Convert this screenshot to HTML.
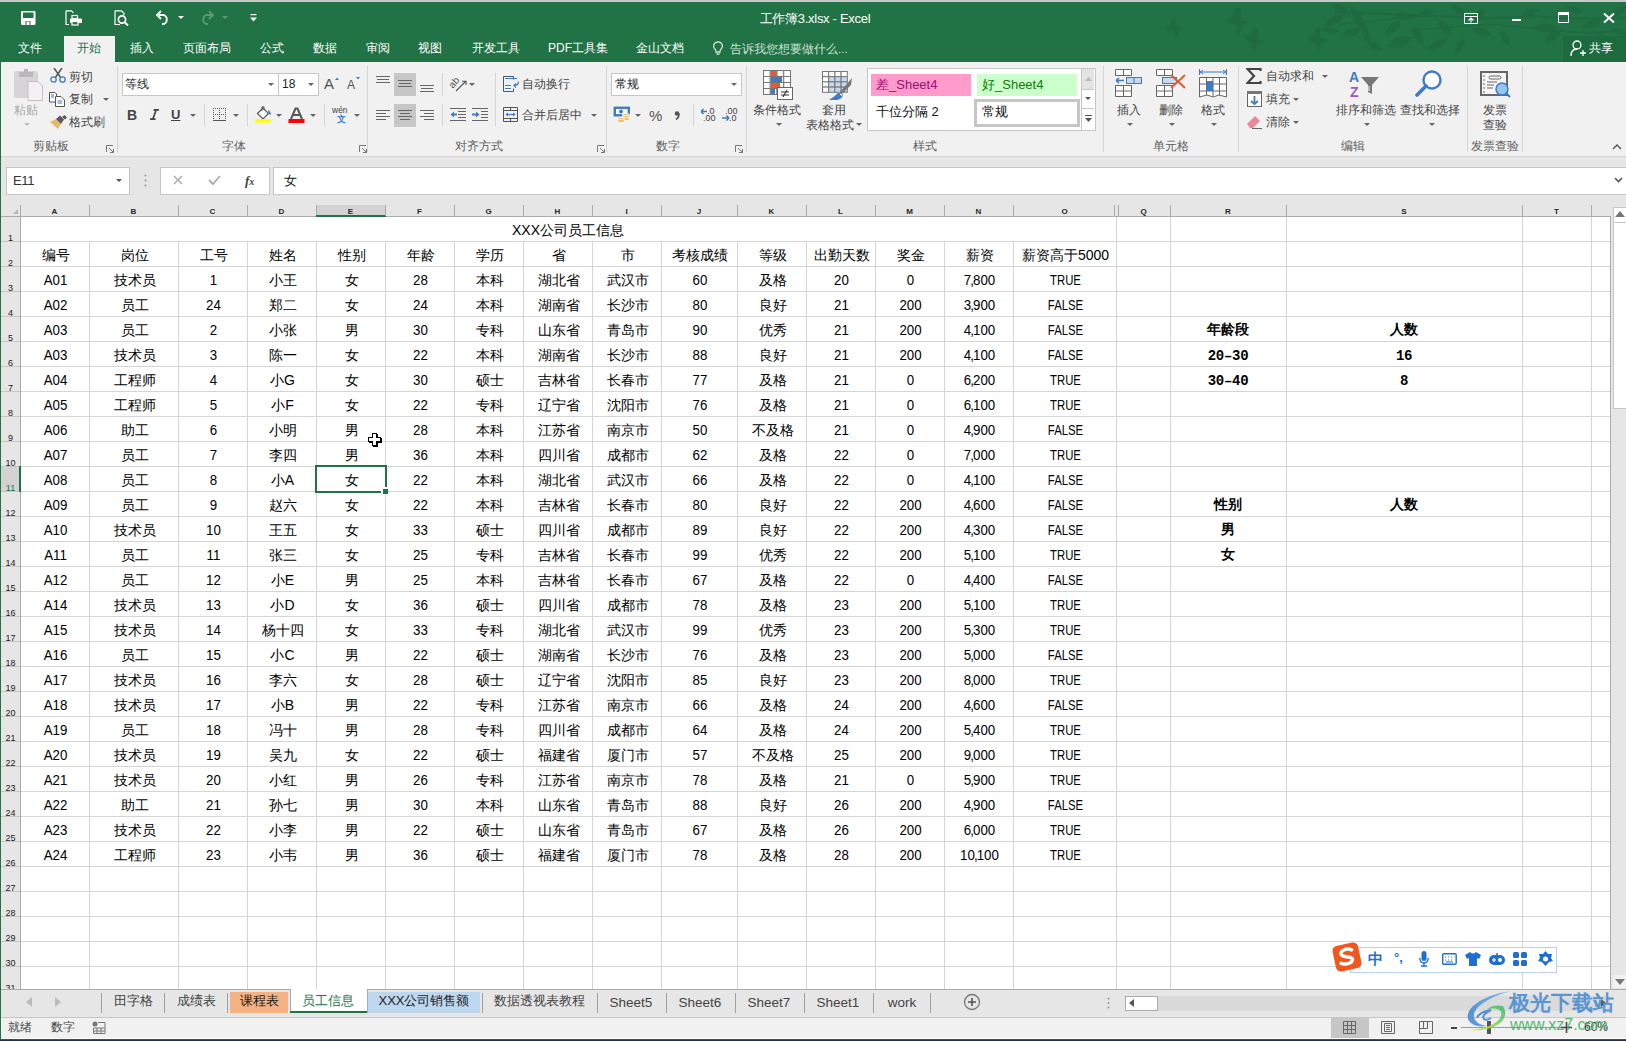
<!DOCTYPE html>
<html><head><meta charset="utf-8"><style>
*{margin:0;padding:0;box-sizing:content-box}
html,body{width:1626px;height:1041px;overflow:hidden;background:#f1f1f1;font-family:"Liberation Sans",sans-serif;position:relative}
div,span{position:absolute}
.hl{left:21px;width:1589px;height:1px;background:#d4d4d4}
.vl{top:217px;width:1px;height:772px;background:#d4d4d4}
.ht{top:205px;width:1px;height:11px;background:#ababab}
.cn{top:206px;height:11px;line-height:11px;font-size:8px;text-align:center;color:#262626;font-weight:bold}
.rn{left:1px;width:19px;height:12px;line-height:12px;font-size:9px;text-align:center;color:#1a1a1a}
.c{height:24px;line-height:24px;font-size:14px;text-align:center;color:#000;white-space:nowrap}
.b{font-family:"Liberation Serif",serif;font-weight:bold}
.m{font-family:"Liberation Mono",monospace;font-size:14px;letter-spacing:-0.3px;margin-top:1px}
</style></head><body>
<div style="left:1px;top:62px;width:1625px;height:94px;background:#f1f1f1"></div><div style="left:0px;top:156px;width:1626px;height:1px;background:#d5d5d5"></div><svg style="position:absolute;left:13px;top:69px;" width="31" height="32" viewBox="0 0 31 32"><rect x="1" y="2" width="24" height="27" rx="2" fill="#d7d4d7"/><path d="M6 3H20V8H6Z M11 0H15V3H11Z" fill="#bbb8bb"/><path d="M15 12.5H25L29.5 17V31.5H15Z" fill="#f4f0f4" stroke="#c4bfc4" stroke-width="1"/></svg><div style="left:-34px;width:120px;text-align:center;top:98px;height:24px;line-height:24px;font-size:12px;color:#a8a8a8;white-space:nowrap;">粘贴</div><svg style="position:absolute;left:24px;top:123px;" width="6" height="3" viewBox="0 0 6 3"><path d="M0 0H6L3 3Z" fill="#bbb"/></svg><svg style="position:absolute;left:50px;top:68px;" width="16" height="15" viewBox="0 0 16 15"><path d="M4 0L11 10 M12 0L5 10" stroke="#555" stroke-width="1.5"/><circle cx="3.5" cy="11.5" r="2.7" stroke="#3e7bc4" stroke-width="1.3" fill="none"/><circle cx="12.5" cy="11.5" r="2.7" stroke="#3e7bc4" stroke-width="1.3" fill="none"/></svg><div style="left:69px;top:65px;height:24px;line-height:24px;font-size:12px;color:#444;white-space:nowrap;">剪切</div><svg style="position:absolute;left:49px;top:92px;" width="17" height="15" viewBox="0 0 17 15"><path d="M0.5 0.5H6L7.5 2V10H0.5Z" fill="#fff" stroke="#555"/><path d="M2 3H5 M2 5H5" stroke="#3e7bc4"/><path d="M6.5 4.5H12L15.5 8V14.5H6.5Z" fill="#fff" stroke="#555"/><path d="M8.5 9H13 M8.5 11H13" stroke="#3e7bc4"/></svg><div style="left:69px;top:87px;height:24px;line-height:24px;font-size:12px;color:#444;white-space:nowrap;">复制</div><svg style="position:absolute;left:103px;top:98px;" width="6" height="3" viewBox="0 0 6 3"><path d="M0 0H6L3 3Z" fill="#666"/></svg><svg style="position:absolute;left:50px;top:115px;" width="17" height="14" viewBox="0 0 17 14"><path d="M0 7L6 4L11 9L8 14Z" fill="#e8b86a"/><path d="M6 4L10 0.5L14 4.5L11 9Z" fill="#5a5a5a"/><path d="M12 2L14.5 0L17 2.5L15 4.5Z" fill="#5a5a5a"/></svg><div style="left:69px;top:110px;height:24px;line-height:24px;font-size:12px;color:#444;white-space:nowrap;">格式刷</div><div style="left:-9px;width:120px;text-align:center;top:134px;height:24px;line-height:24px;font-size:12px;color:#5f5f5f;white-space:nowrap;">剪贴板</div><svg style="position:absolute;left:106px;top:145px;" width="8" height="8" viewBox="0 0 8 8"><path d="M0.5 7V0.5H7 M3 3L7.5 7.5 M7.5 4V7.5H4" stroke="#777" stroke-width="1" fill="none"/></svg><div style="left:117px;top:66px;width:1px;height:86px;background:#d5d5d5"></div><div style="left:122px;top:73px;width:155px;height:21px;background:#fff;border:1px solid #c6c6c6"></div><div style="left:125px;top:72px;height:24px;line-height:24px;font-size:12px;color:#222;white-space:nowrap;">等线</div><svg style="position:absolute;left:268px;top:83px;" width="6" height="3" viewBox="0 0 6 3"><path d="M0 0H6L3 3Z" fill="#666"/></svg><div style="left:278px;top:73px;width:39px;height:21px;background:#fff;border:1px solid #c6c6c6"></div><div style="left:282px;top:72px;height:24px;line-height:24px;font-size:12px;color:#222;white-space:nowrap;">18</div><svg style="position:absolute;left:308px;top:83px;" width="6" height="3" viewBox="0 0 6 3"><path d="M0 0H6L3 3Z" fill="#666"/></svg><svg style="position:absolute;left:324px;top:76px;" width="16" height="14" viewBox="0 0 16 14"><text x="0" y="13" font-family="Liberation Sans" font-size="15" fill="#555">A</text><path d="M11 4L13 1.5L15 4Z" fill="#3e7bc4"/></svg><svg style="position:absolute;left:347px;top:76px;" width="14" height="14" viewBox="0 0 14 14"><text x="0" y="13" font-family="Liberation Sans" font-size="12" fill="#555">A</text><path d="M9 1H13L11 3.5Z" fill="#3e7bc4"/></svg><div style="left:127px;top:101px;height:28px;line-height:28px;font-size:14px;color:#444;white-space:nowrap;"><b>B</b></div><svg style="position:absolute;left:150px;top:109px;" width="9" height="11" viewBox="0 0 9 11"><path d="M3.5 0.8H9 M0 10.2H5.5 M6.2 0.8L2.8 10.2" stroke="#444" stroke-width="1.7" fill="none"/></svg><div style="left:171px;top:102px;height:26px;line-height:26px;font-size:13px;color:#444;white-space:nowrap;font-weight:bold"><u>U</u></div><svg style="position:absolute;left:190px;top:114px;" width="6" height="3" viewBox="0 0 6 3"><path d="M0 0H6L3 3Z" fill="#666"/></svg><div style="left:204px;top:104px;width:1px;height:22px;background:#d5d5d5"></div><svg style="position:absolute;left:213px;top:108px;" width="14" height="15" viewBox="0 0 14 15"><rect x="0" y="0" width="1" height="1" fill="#555"/><rect x="2" y="0" width="1" height="1" fill="#555"/><rect x="4" y="0" width="1" height="1" fill="#555"/><rect x="6" y="0" width="1" height="1" fill="#555"/><rect x="8" y="0" width="1" height="1" fill="#555"/><rect x="10" y="0" width="1" height="1" fill="#555"/><rect x="12" y="0" width="1" height="1" fill="#555"/><rect x="0" y="6" width="1" height="1" fill="#555"/><rect x="2" y="6" width="1" height="1" fill="#555"/><rect x="4" y="6" width="1" height="1" fill="#555"/><rect x="6" y="6" width="1" height="1" fill="#555"/><rect x="8" y="6" width="1" height="1" fill="#555"/><rect x="10" y="6" width="1" height="1" fill="#555"/><rect x="12" y="6" width="1" height="1" fill="#555"/><rect x="0" y="12" width="1" height="1" fill="#555"/><rect x="2" y="12" width="1" height="1" fill="#555"/><rect x="4" y="12" width="1" height="1" fill="#555"/><rect x="6" y="12" width="1" height="1" fill="#555"/><rect x="8" y="12" width="1" height="1" fill="#555"/><rect x="10" y="12" width="1" height="1" fill="#555"/><rect x="12" y="12" width="1" height="1" fill="#555"/><rect x="0" y="0" width="1" height="1" fill="#555"/><rect x="0" y="2" width="1" height="1" fill="#555"/><rect x="0" y="4" width="1" height="1" fill="#555"/><rect x="0" y="6" width="1" height="1" fill="#555"/><rect x="0" y="8" width="1" height="1" fill="#555"/><rect x="0" y="10" width="1" height="1" fill="#555"/><rect x="0" y="12" width="1" height="1" fill="#555"/><rect x="6" y="0" width="1" height="1" fill="#555"/><rect x="6" y="2" width="1" height="1" fill="#555"/><rect x="6" y="4" width="1" height="1" fill="#555"/><rect x="6" y="6" width="1" height="1" fill="#555"/><rect x="6" y="8" width="1" height="1" fill="#555"/><rect x="6" y="10" width="1" height="1" fill="#555"/><rect x="6" y="12" width="1" height="1" fill="#555"/><rect x="12" y="0" width="1" height="1" fill="#555"/><rect x="12" y="2" width="1" height="1" fill="#555"/><rect x="12" y="4" width="1" height="1" fill="#555"/><rect x="12" y="6" width="1" height="1" fill="#555"/><rect x="12" y="8" width="1" height="1" fill="#555"/><rect x="12" y="10" width="1" height="1" fill="#555"/><rect x="12" y="12" width="1" height="1" fill="#555"/><rect x="0" y="12" width="13" height="1" fill="#555"/></svg><svg style="position:absolute;left:233px;top:114px;" width="6" height="3" viewBox="0 0 6 3"><path d="M0 0H6L3 3Z" fill="#666"/></svg><div style="left:247px;top:104px;width:1px;height:22px;background:#d5d5d5"></div><svg style="position:absolute;left:255px;top:106px;" width="18" height="17" viewBox="0 0 18 17"><path d="M2.5 7.5L8 2L13.5 7.5L8 13Z" fill="#fff" stroke="#555" stroke-width="1.2"/><path d="M7 5V0.8H9V4" stroke="#555" stroke-width="1" fill="none"/><path d="M13 4Q16.5 5 15.5 9.5L14 7.5Z" fill="#3e7bc4"/><rect x="0" y="13" width="16" height="3.6" fill="#ffff00"/></svg><svg style="position:absolute;left:276px;top:114px;" width="6" height="3" viewBox="0 0 6 3"><path d="M0 0H6L3 3Z" fill="#666"/></svg><svg style="position:absolute;left:288px;top:107px;" width="17" height="17" viewBox="0 0 17 17"><path d="M3 12L7.5 1.5H9.5L14 12 M5 8H12" stroke="#555" stroke-width="2" fill="none"/><rect x="0.5" y="12" width="16" height="4" fill="#ff0000"/></svg><svg style="position:absolute;left:310px;top:114px;" width="6" height="3" viewBox="0 0 6 3"><path d="M0 0H6L3 3Z" fill="#666"/></svg><div style="left:324px;top:104px;width:1px;height:22px;background:#d5d5d5"></div><div style="left:332px;top:101.5px;height:17.0px;line-height:17.0px;font-size:8.5px;color:#444;white-space:nowrap;">wén</div><div style="left:337px;top:110px;height:18px;line-height:18px;font-size:9px;color:#3e7bc4;white-space:nowrap;font-weight:bold">文</div><svg style="position:absolute;left:354px;top:114px;" width="6" height="3" viewBox="0 0 6 3"><path d="M0 0H6L3 3Z" fill="#666"/></svg><div style="left:174px;width:120px;text-align:center;top:134px;height:24px;line-height:24px;font-size:12px;color:#5f5f5f;white-space:nowrap;">字体</div><svg style="position:absolute;left:359px;top:145px;" width="8" height="8" viewBox="0 0 8 8"><path d="M0.5 7V0.5H7 M3 3L7.5 7.5 M7.5 4V7.5H4" stroke="#777" stroke-width="1" fill="none"/></svg><div style="left:367px;top:66px;width:1px;height:86px;background:#d5d5d5"></div><svg style="position:absolute;left:376px;top:76px;" width="16" height="11" viewBox="0 0 16 11"><rect x="0" y="0" width="14" height="1" fill="#666"/><rect x="1" y="3" width="12" height="1" fill="#666"/><rect x="0" y="6" width="14" height="1" fill="#666"/></svg><div style="left:394px;top:73px;width:22px;height:23px;background:#c6c6c6"></div><svg style="position:absolute;left:398px;top:80px;" width="16" height="11" viewBox="0 0 16 11"><rect x="0" y="0" width="14" height="1" fill="#666"/><rect x="1" y="3" width="12" height="1" fill="#666"/><rect x="0" y="6" width="14" height="1" fill="#666"/></svg><svg style="position:absolute;left:420px;top:85px;" width="16" height="11" viewBox="0 0 16 11"><rect x="0" y="0" width="14" height="1" fill="#666"/><rect x="1" y="3" width="12" height="1" fill="#666"/><rect x="0" y="6" width="14" height="1" fill="#666"/></svg><div style="left:442px;top:73px;width:1px;height:23px;background:#d5d5d5"></div><svg style="position:absolute;left:449px;top:75px;" width="19" height="18" viewBox="0 0 19 18"><text x="0" y="0" font-family="Liberation Sans" font-size="10" fill="#555" transform="translate(4 14) rotate(-50)">ab</text><path d="M7 16L17 6 M13 6.2H17V10" stroke="#555" stroke-width="1.1" fill="none"/></svg><svg style="position:absolute;left:469px;top:83px;" width="6" height="3" viewBox="0 0 6 3"><path d="M0 0H6L3 3Z" fill="#666"/></svg><div style="left:495px;top:73px;width:1px;height:53px;background:#d5d5d5"></div><svg style="position:absolute;left:503px;top:76px;" width="17" height="16" viewBox="0 0 17 16"><path d="M10.5 3.5V0.5H0.5V15.5H10.5V12.5" stroke="#555" stroke-width="1" fill="none"/><path d="M2 2.5H14 M2 9.5H8 M2 12.5H8" stroke="#3e7bc4" stroke-width="1.2"/><path d="M15.5 5.5Q15.5 9.5 11 9.5 M13 7.5L11 9.5L13 11.5" stroke="#3e7bc4" stroke-width="1.2" fill="none"/></svg><div style="left:522px;top:72px;height:24px;line-height:24px;font-size:12px;color:#444;white-space:nowrap;">自动换行</div><svg style="position:absolute;left:376px;top:110px;" width="16" height="14" viewBox="0 0 16 14"><rect x="0" y="0" width="14" height="1" fill="#666"/><rect x="0" y="3" width="10" height="1" fill="#666"/><rect x="0" y="6" width="14" height="1" fill="#666"/><rect x="0" y="9" width="10" height="1" fill="#666"/></svg><div style="left:394px;top:104px;width:22px;height:23px;background:#c6c6c6"></div><svg style="position:absolute;left:398px;top:110px;" width="16" height="14" viewBox="0 0 16 14"><rect x="0" y="0" width="14" height="1" fill="#666"/><rect x="2" y="3" width="10" height="1" fill="#666"/><rect x="0" y="6" width="14" height="1" fill="#666"/><rect x="2" y="9" width="10" height="1" fill="#666"/></svg><svg style="position:absolute;left:420px;top:110px;" width="16" height="14" viewBox="0 0 16 14"><rect x="0" y="0" width="14" height="1" fill="#666"/><rect x="4" y="3" width="10" height="1" fill="#666"/><rect x="0" y="6" width="14" height="1" fill="#666"/><rect x="4" y="9" width="10" height="1" fill="#666"/></svg><div style="left:442px;top:104px;width:1px;height:22px;background:#d5d5d5"></div><svg style="position:absolute;left:450px;top:107px;" width="17" height="15" viewBox="0 0 17 15"><path d="M0 1.5H16 M8 4.5H16 M8 7.5H16 M8 10.5H16 M0 13.5H16" stroke="#666" stroke-width="1"/><path d="M0.5 7.5L4 4.5V10.5Z" fill="#3e7bc4"/><path d="M3 7.5H7" stroke="#3e7bc4" stroke-width="2"/></svg><svg style="position:absolute;left:472px;top:107px;" width="17" height="15" viewBox="0 0 17 15"><path d="M0 1.5H16 M9 4.5H16 M9 7.5H16 M9 10.5H16 M0 13.5H16" stroke="#666" stroke-width="1"/><path d="M7.5 7.5L4 4.5V10.5Z" fill="#3e7bc4"/><path d="M0 7.5H5" stroke="#3e7bc4" stroke-width="2"/></svg><svg style="position:absolute;left:503px;top:107px;" width="16" height="16" viewBox="0 0 16 16"><path d="M0.5 0.5H14.5V14.5H0.5Z M0.5 3.5H14.5 M0.5 11.5H14.5 M7.5 0.5V3.5 M7.5 11.5V14.5" stroke="#555" fill="none"/><path d="M3 7.5H12" stroke="#3e7bc4" stroke-width="1.2"/><path d="M2.5 7.5L5 5.5V9.5Z M12.5 7.5L10 5.5V9.5Z" fill="#3e7bc4"/></svg><div style="left:522px;top:103px;height:24px;line-height:24px;font-size:12px;color:#444;white-space:nowrap;">合并后居中</div><svg style="position:absolute;left:591px;top:114px;" width="6" height="3" viewBox="0 0 6 3"><path d="M0 0H6L3 3Z" fill="#666"/></svg><div style="left:419px;width:120px;text-align:center;top:134px;height:24px;line-height:24px;font-size:12px;color:#5f5f5f;white-space:nowrap;">对齐方式</div><svg style="position:absolute;left:597px;top:145px;" width="8" height="8" viewBox="0 0 8 8"><path d="M0.5 7V0.5H7 M3 3L7.5 7.5 M7.5 4V7.5H4" stroke="#777" stroke-width="1" fill="none"/></svg><div style="left:606px;top:66px;width:1px;height:86px;background:#d5d5d5"></div><div style="left:611px;top:73px;width:129px;height:21px;background:#fff;border:1px solid #c6c6c6"></div><div style="left:615px;top:72px;height:24px;line-height:24px;font-size:12px;color:#222;white-space:nowrap;">常规</div><svg style="position:absolute;left:731px;top:83px;" width="6" height="3" viewBox="0 0 6 3"><path d="M0 0H6L3 3Z" fill="#666"/></svg><svg style="position:absolute;left:613px;top:106px;" width="18" height="18" viewBox="0 0 18 18"><rect x="1.8" y="1.8" width="14" height="7.5" fill="#fff" stroke="#3e7bc4" stroke-width="2.4"/><circle cx="8" cy="5.5" r="2" fill="#3e7bc4"/><g fill="#e8b86a" stroke="#fff" stroke-width="0.8"><ellipse cx="13" cy="9" rx="3.8" ry="1.5"/><ellipse cx="13" cy="11" rx="3.8" ry="1.5"/><ellipse cx="13" cy="13" rx="3.8" ry="1.5"/><ellipse cx="8" cy="13" rx="3.8" ry="1.5"/><ellipse cx="8" cy="15" rx="3.8" ry="1.5"/></g></svg><svg style="position:absolute;left:635px;top:114px;" width="6" height="3" viewBox="0 0 6 3"><path d="M0 0H6L3 3Z" fill="#666"/></svg><svg style="position:absolute;left:649px;top:108px;" width="16" height="14" viewBox="0 0 16 14"><text x="0" y="12.5" font-family="Liberation Sans" font-size="15" fill="#555">%</text></svg><svg style="position:absolute;left:673px;top:110px;" width="8" height="10" viewBox="0 0 8 10"><circle cx="4" cy="3.5" r="2.3" fill="#555"/><path d="M6 3.5Q6.5 7 3 9.5" stroke="#555" stroke-width="1.6" fill="none"/></svg><div style="left:693px;top:104px;width:1px;height:22px;background:#d5d5d5"></div><svg style="position:absolute;left:700px;top:107px;" width="18" height="16" viewBox="0 0 18 16"><text x="7" y="7" font-family="Liberation Sans" font-size="9" fill="#444">.0</text><text x="3" y="14" font-family="Liberation Sans" font-size="9" fill="#444">.00</text><path d="M1 4.5H7 M1 4.5L3.5 2 M1 4.5L3.5 7" stroke="#3e7bc4" stroke-width="1.5" fill="none"/></svg><svg style="position:absolute;left:721px;top:107px;" width="18" height="16" viewBox="0 0 18 16"><text x="4" y="7" font-family="Liberation Sans" font-size="9" fill="#444">.00</text><text x="8" y="14" font-family="Liberation Sans" font-size="9" fill="#444">.0</text><path d="M1 11H8 M8 11L5.5 8.5 M8 11L5.5 13.5" stroke="#3e7bc4" stroke-width="1.5" fill="none"/></svg><div style="left:608px;width:120px;text-align:center;top:134px;height:24px;line-height:24px;font-size:12px;color:#5f5f5f;white-space:nowrap;">数字</div><svg style="position:absolute;left:735px;top:145px;" width="8" height="8" viewBox="0 0 8 8"><path d="M0.5 7V0.5H7 M3 3L7.5 7.5 M7.5 4V7.5H4" stroke="#777" stroke-width="1" fill="none"/></svg><div style="left:746px;top:66px;width:1px;height:86px;background:#d5d5d5"></div><svg style="position:absolute;left:763px;top:70px;" width="31" height="31" viewBox="0 0 31 31"><rect x="0.5" y="0.5" width="6.75" height="6" fill="#fff" stroke="#777" stroke-width="1"/><rect x="7.25" y="0.5" width="6.75" height="6" fill="#fff" stroke="#777" stroke-width="1"/><rect x="14.0" y="0.5" width="6.75" height="6" fill="#fff" stroke="#777" stroke-width="1"/><rect x="20.75" y="0.5" width="6.75" height="6" fill="#fff" stroke="#777" stroke-width="1"/><rect x="0.5" y="6.5" width="6.75" height="6" fill="#fff" stroke="#777" stroke-width="1"/><rect x="7.25" y="6.5" width="6.75" height="6" fill="#fff" stroke="#777" stroke-width="1"/><rect x="14.0" y="6.5" width="6.75" height="6" fill="#fff" stroke="#777" stroke-width="1"/><rect x="20.75" y="6.5" width="6.75" height="6" fill="#fff" stroke="#777" stroke-width="1"/><rect x="0.5" y="12.5" width="6.75" height="6" fill="#fff" stroke="#777" stroke-width="1"/><rect x="7.25" y="12.5" width="6.75" height="6" fill="#fff" stroke="#777" stroke-width="1"/><rect x="14.0" y="12.5" width="6.75" height="6" fill="#fff" stroke="#777" stroke-width="1"/><rect x="20.75" y="12.5" width="6.75" height="6" fill="#fff" stroke="#777" stroke-width="1"/><rect x="0.5" y="18.5" width="6.75" height="6" fill="#fff" stroke="#777" stroke-width="1"/><rect x="7.25" y="18.5" width="6.75" height="6" fill="#fff" stroke="#777" stroke-width="1"/><rect x="14.0" y="18.5" width="6.75" height="6" fill="#fff" stroke="#777" stroke-width="1"/><rect x="20.75" y="18.5" width="6.75" height="6" fill="#fff" stroke="#777" stroke-width="1"/><rect x="8" y="1" width="6" height="5" fill="#e05b36"/><rect x="8" y="7" width="11" height="5" fill="#3e7bc4"/><rect x="8" y="13" width="9" height="5" fill="#e05b36"/><rect x="8" y="19" width="4" height="5" fill="#3e7bc4"/><rect x="14.5" y="17.5" width="15" height="12" fill="#fff" stroke="#666" stroke-width="1"/><path d="M18 22H26 M18 25H26 M24 20L20 27" stroke="#333" stroke-width="1.1"/></svg><div style="left:717px;width:120px;text-align:center;top:98px;height:24px;line-height:24px;font-size:12px;color:#444;white-space:nowrap;">条件格式</div><svg style="position:absolute;left:776px;top:123px;" width="6" height="3" viewBox="0 0 6 3"><path d="M0 0H6L3 3Z" fill="#666"/></svg><svg style="position:absolute;left:822px;top:71px;" width="31" height="30" viewBox="0 0 31 30"><rect x="0.5" y="0.5" width="6.2" height="5.2" fill="#fff" stroke="#777" stroke-width="1"/><rect x="6.7" y="0.5" width="6.2" height="5.2" fill="#fff" stroke="#777" stroke-width="1"/><rect x="12.9" y="0.5" width="6.2" height="5.2" fill="#fff" stroke="#777" stroke-width="1"/><rect x="19.1" y="0.5" width="6.2" height="5.2" fill="#fff" stroke="#777" stroke-width="1"/><rect x="0.5" y="5.7" width="6.2" height="5.2" fill="#fff" stroke="#777" stroke-width="1"/><rect x="6.7" y="5.7" width="6.2" height="5.2" fill="#c5d9ef" stroke="#777" stroke-width="1"/><rect x="12.9" y="5.7" width="6.2" height="5.2" fill="#c5d9ef" stroke="#777" stroke-width="1"/><rect x="19.1" y="5.7" width="6.2" height="5.2" fill="#c5d9ef" stroke="#777" stroke-width="1"/><rect x="0.5" y="10.9" width="6.2" height="5.2" fill="#fff" stroke="#777" stroke-width="1"/><rect x="6.7" y="10.9" width="6.2" height="5.2" fill="#c5d9ef" stroke="#777" stroke-width="1"/><rect x="12.9" y="10.9" width="6.2" height="5.2" fill="#c5d9ef" stroke="#777" stroke-width="1"/><rect x="19.1" y="10.9" width="6.2" height="5.2" fill="#c5d9ef" stroke="#777" stroke-width="1"/><rect x="0.5" y="16.1" width="6.2" height="5.2" fill="#fff" stroke="#777" stroke-width="1"/><rect x="6.7" y="16.1" width="6.2" height="5.2" fill="#c5d9ef" stroke="#777" stroke-width="1"/><rect x="12.9" y="16.1" width="6.2" height="5.2" fill="#c5d9ef" stroke="#777" stroke-width="1"/><rect x="19.1" y="16.1" width="6.2" height="5.2" fill="#c5d9ef" stroke="#777" stroke-width="1"/><path d="M30 7L29 14L20 23L18 21Z" fill="#777"/><path d="M17.5 21.5L20.5 24.5" stroke="#fff" stroke-width="1"/><path d="M16 22Q20 21 21 24Q20 28 15 29H7Q12 26 16 22Z" fill="#3e7bc4"/><path d="M18 23.5Q19.5 23 20 24.5" stroke="#fff" stroke-width="1.2" fill="none"/></svg><div style="left:774px;width:120px;text-align:center;top:98px;height:24px;line-height:24px;font-size:12px;color:#444;white-space:nowrap;">套用</div><div style="left:770px;width:120px;text-align:center;top:113px;height:24px;line-height:24px;font-size:12px;color:#444;white-space:nowrap;">表格格式</div><svg style="position:absolute;left:856px;top:123px;" width="6" height="3" viewBox="0 0 6 3"><path d="M0 0H6L3 3Z" fill="#666"/></svg><div style="left:867px;top:68px;width:213px;height:61px;background:#fff;border:1px solid #c6c6c6"></div><div style="left:871px;top:74px;width:100px;height:22px;background:#ff9ccb"></div><div style="left:876px;top:72px;height:26px;line-height:26px;font-size:13px;color:#9c0a73;white-space:nowrap;">差_Sheet4</div><div style="left:977px;top:74px;width:100px;height:22px;background:#ccffcc"></div><div style="left:982px;top:72px;height:26px;line-height:26px;font-size:13px;color:#0a7a0a;white-space:nowrap;">好_Sheet4</div><div style="left:876px;top:99px;height:26px;line-height:26px;font-size:13px;color:#111;white-space:nowrap;">千位分隔 2</div><div style="left:974px;top:99px;width:100px;height:22px;background:#fff;border:3px solid #c6c6c6"></div><div style="left:982px;top:99px;height:26px;line-height:26px;font-size:13px;color:#111;white-space:nowrap;">常规</div><div style="left:1081px;top:68px;width:13px;height:61px;background:#fff;border:1px solid #c6c6c6"></div><div style="left:1082px;top:69px;width:12px;height:20px;background:#e3e3e3"></div><div style="left:1082px;top:89px;width:12px;height:1px;background:#c6c6c6"></div><div style="left:1082px;top:108px;width:12px;height:1px;background:#c6c6c6"></div><svg style="position:absolute;left:1085px;top:77px;" width="7" height="4" viewBox="0 0 7 4"><path d="M0 4H7L3.5 0Z" fill="#bbb"/></svg><svg style="position:absolute;left:1085px;top:97px;" width="6" height="3" viewBox="0 0 6 3"><path d="M0 0H6L3 3Z" fill="#555"/></svg><svg style="position:absolute;left:1085px;top:115px;" width="7" height="8" viewBox="0 0 7 8"><path d="M0 0.5H7" stroke="#555"/><path d="M0 3H7L3.5 7Z" fill="#555"/></svg><div style="left:865px;width:120px;text-align:center;top:134px;height:24px;line-height:24px;font-size:12px;color:#5f5f5f;white-space:nowrap;">样式</div><div style="left:1103px;top:66px;width:1px;height:86px;background:#d5d5d5"></div><svg style="position:absolute;left:1115px;top:69px;" width="28" height="29" viewBox="0 0 28 29"><path d="M0.5 0.5H16.5V6.5H0.5Z M8.5 0.5V6.5 M0.5 16.5H16.5V27.5H0.5Z M8.5 16.5V27.5 M0.5 22H16.5" stroke="#666" fill="#fff"/><rect x="11.5" y="8.5" width="15" height="6" fill="#c5d9ef" stroke="#3e7bc4"/><path d="M19 8.5V14.5" stroke="#3e7bc4"/><path d="M1 11.5H9 M1 11.5L4 9 M1 11.5L4 14" stroke="#3e7bc4" stroke-width="1.6" fill="none"/></svg><div style="left:1069px;width:120px;text-align:center;top:98px;height:24px;line-height:24px;font-size:12px;color:#444;white-space:nowrap;">插入</div><svg style="position:absolute;left:1127px;top:123px;" width="6" height="3" viewBox="0 0 6 3"><path d="M0 0H6L3 3Z" fill="#666"/></svg><svg style="position:absolute;left:1156px;top:69px;" width="30" height="29" viewBox="0 0 30 29"><path d="M0.5 0.5H16.5V6.5H0.5Z M8.5 0.5V6.5 M0.5 16.5H16.5V27.5H0.5Z M8.5 16.5V27.5 M0.5 22H16.5" stroke="#666" fill="#fff"/><rect x="6.5" y="8.5" width="14" height="6" fill="#c5d9ef" stroke="#3e7bc4"/><path d="M15 6L29 19 M29 6L15 19" stroke="#e05b36" stroke-width="2"/></svg><div style="left:1111px;width:120px;text-align:center;top:98px;height:24px;line-height:24px;font-size:12px;color:#444;white-space:nowrap;">删除</div><svg style="position:absolute;left:1169px;top:123px;" width="6" height="3" viewBox="0 0 6 3"><path d="M0 0H6L3 3Z" fill="#666"/></svg><svg style="position:absolute;left:1199px;top:69px;" width="29" height="30" viewBox="0 0 29 30"><path d="M1 3H27 M1 3L4 1 M1 3L4 5 M27 3L24 1 M27 3L24 5 M0.5 0V6 M27.5 0V6" stroke="#3e7bc4" fill="none"/><path d="M0.5 8.5H27.5V28 L20 26 L14 28 L8 26 L0.5 28Z" fill="#fff" stroke="#666"/><path d="M0.5 15H27.5 M0.5 22H27.5 M7.5 8.5V26 M14 8.5V27 M20.5 8.5V26" stroke="#666"/><rect x="7.5" y="12" width="6.5" height="10" fill="#3e7bc4"/></svg><div style="left:1153px;width:120px;text-align:center;top:98px;height:24px;line-height:24px;font-size:12px;color:#444;white-space:nowrap;">格式</div><svg style="position:absolute;left:1211px;top:123px;" width="6" height="3" viewBox="0 0 6 3"><path d="M0 0H6L3 3Z" fill="#666"/></svg><div style="left:1111px;width:120px;text-align:center;top:134px;height:24px;line-height:24px;font-size:12px;color:#5f5f5f;white-space:nowrap;">单元格</div><div style="left:1238px;top:66px;width:1px;height:86px;background:#d5d5d5"></div><svg style="position:absolute;left:1246px;top:68px;" width="16" height="16" viewBox="0 0 16 16"><path d="M14.5 3V1H1.5L8 8L1.5 15H14.5V13" stroke="#444" stroke-width="2.2" fill="none"/></svg><div style="left:1266px;top:64px;height:24px;line-height:24px;font-size:12px;color:#444;white-space:nowrap;">自动求和</div><svg style="position:absolute;left:1322px;top:75px;" width="6" height="3" viewBox="0 0 6 3"><path d="M0 0H6L3 3Z" fill="#666"/></svg><svg style="position:absolute;left:1247px;top:91px;" width="15" height="16" viewBox="0 0 15 16"><rect x="0.5" y="0.5" width="14" height="15" fill="#fff" stroke="#666"/><rect x="0" y="0" width="15" height="3" fill="#777"/><path d="M7.5 5V13 M4 10L7.5 13L11 10" stroke="#3e7bc4" stroke-width="1.8" fill="none"/></svg><div style="left:1266px;top:87px;height:24px;line-height:24px;font-size:12px;color:#444;white-space:nowrap;">填充</div><svg style="position:absolute;left:1293px;top:98px;" width="6" height="3" viewBox="0 0 6 3"><path d="M0 0H6L3 3Z" fill="#666"/></svg><svg style="position:absolute;left:1247px;top:115px;" width="15" height="14" viewBox="0 0 15 14"><path d="M0 9L8 1L13 6L6 13H3Z" fill="#e8899c"/><path d="M5 13.5H15" stroke="#666"/></svg><div style="left:1266px;top:110px;height:24px;line-height:24px;font-size:12px;color:#444;white-space:nowrap;">清除</div><svg style="position:absolute;left:1293px;top:121px;" width="6" height="3" viewBox="0 0 6 3"><path d="M0 0H6L3 3Z" fill="#666"/></svg><svg style="position:absolute;left:1349px;top:70px;" width="31" height="28" viewBox="0 0 31 28"><text x="0" y="12" font-family="Liberation Sans" font-size="14" font-weight="bold" fill="#3e7bc4">A</text><text x="1" y="27" font-family="Liberation Sans" font-size="14" font-weight="bold" fill="#9b59c4">Z</text><path d="M12 7H30L23 15V24L19 22V15Z" fill="#777"/><path d="M20 16V21" stroke="#fff"/></svg><div style="left:1306px;width:120px;text-align:center;top:98px;height:24px;line-height:24px;font-size:12px;color:#444;white-space:nowrap;">排序和筛选</div><svg style="position:absolute;left:1364px;top:123px;" width="6" height="3" viewBox="0 0 6 3"><path d="M0 0H6L3 3Z" fill="#666"/></svg><svg style="position:absolute;left:1415px;top:70px;" width="29" height="28" viewBox="0 0 29 28"><circle cx="17" cy="10" r="8.5" fill="#fff" stroke="#3e7bc4" stroke-width="2.4"/><path d="M11 16L2 25" stroke="#3e7bc4" stroke-width="3.6" stroke-linecap="round"/></svg><div style="left:1370px;width:120px;text-align:center;top:98px;height:24px;line-height:24px;font-size:12px;color:#444;white-space:nowrap;">查找和选择</div><svg style="position:absolute;left:1429px;top:123px;" width="6" height="3" viewBox="0 0 6 3"><path d="M0 0H6L3 3Z" fill="#666"/></svg><div style="left:1293px;width:120px;text-align:center;top:134px;height:24px;line-height:24px;font-size:12px;color:#5f5f5f;white-space:nowrap;">编辑</div><div style="left:1467px;top:66px;width:1px;height:86px;background:#d5d5d5"></div><svg style="position:absolute;left:1480px;top:71px;" width="32" height="27" viewBox="0 0 32 27"><rect x="1" y="1" width="26" height="23" fill="#f5f5f5" stroke="#666" stroke-width="2"/><path d="M4 4V22" stroke="#666" stroke-dasharray="2 2"/><rect x="9" y="5" width="12" height="3" rx="1.5" fill="none" stroke="#666"/><path d="M7 11H17 M7 14H14 M7 17H13" stroke="#666"/><circle cx="22" cy="18" r="6" fill="#93c6f0" stroke="#3e7bc4" stroke-width="1.5"/><path d="M26 22L30 26" stroke="#3e7bc4" stroke-width="2"/></svg><div style="left:1435px;width:120px;text-align:center;top:98px;height:24px;line-height:24px;font-size:12px;color:#444;white-space:nowrap;">发票</div><div style="left:1435px;width:120px;text-align:center;top:113px;height:24px;line-height:24px;font-size:12px;color:#444;white-space:nowrap;">查验</div><div style="left:1435px;width:120px;text-align:center;top:134px;height:24px;line-height:24px;font-size:12px;color:#5f5f5f;white-space:nowrap;">发票查验</div><div style="left:1522px;top:66px;width:1px;height:86px;background:#d5d5d5"></div><svg style="position:absolute;left:1612px;top:144px;" width="10" height="6" viewBox="0 0 10 6"><path d="M1 5L5 1L9 5" stroke="#555" stroke-width="1.4" fill="none"/></svg><div style="left:0px;top:0px;width:1626px;height:2px;background:#c9c9c9"></div><div style="left:0px;top:2px;width:1626px;height:60px;background:#217346"></div><svg style="position:absolute;left:1150px;top:2px;" width="476" height="52" viewBox="0 0 476 52"><g fill="#1f6a40"><path d="M-8 -2 Q-3 -3 -1 -10 Q1 -12 3 -9 Q2 -4 4 -1 L9 -1 Q8 2 5 2 Q3 6 1 10 Q-1 7 0 2 Q-5 3 -8 -2Z" transform="translate(24 27) scale(1.0) rotate(-10)"/><path d="M-8 -2 Q-3 -3 -1 -10 Q1 -12 3 -9 Q2 -4 4 -1 L9 -1 Q8 2 5 2 Q3 6 1 10 Q-1 7 0 2 Q-5 3 -8 -2Z" transform="translate(87 20) scale(1.3) rotate(0)"/><path d="M-8 -2 Q-3 -3 -1 -10 Q1 -12 3 -9 Q2 -4 4 -1 L9 -1 Q8 2 5 2 Q3 6 1 10 Q-1 7 0 2 Q-5 3 -8 -2Z" transform="translate(103 38) scale(1.2) rotate(10)"/><path d="M-8 -2 Q-3 -3 -1 -10 Q1 -12 3 -9 Q2 -4 4 -1 L9 -1 Q8 2 5 2 Q3 6 1 10 Q-1 7 0 2 Q-5 3 -8 -2Z" transform="translate(167 38) scale(1.2) rotate(0)"/><path d="M185 10 Q240 12 290 14 Q340 18 380 14 Q430 18 476 16" stroke="#1f6a40" stroke-width="2" fill="none"/><path d="M190 22 Q220 20 250 16 M260 28 Q300 26 340 22 Q380 26 420 30 Q450 32 476 28" stroke="#1f6a40" stroke-width="1.5" fill="none"/><path d="M-12.0 0 Q0 -8.0 12.0 0 Q0 8.0 -12.0 0Z" transform="translate(185 18) rotate(-30)"/><path d="M-9.0 0 Q0 -6.4 9.0 0 Q0 6.4 -9.0 0Z" transform="translate(190 6) rotate(20)"/><path d="M-12.0 0 Q0 -8.0 12.0 0 Q0 8.0 -12.0 0Z" transform="translate(207 14) rotate(60)"/><path d="M-9.0 0 Q0 -6.4 9.0 0 Q0 6.4 -9.0 0Z" transform="translate(180 28) rotate(10)"/><path d="M-10.5 0 Q0 -8.0 10.5 0 Q0 8.0 -10.5 0Z" transform="translate(202 30) rotate(-20)"/><path d="M-9.0 0 Q0 -6.4 9.0 0 Q0 6.4 -9.0 0Z" transform="translate(212 24) rotate(40)"/><path d="M-9.0 0 Q0 -6.4 9.0 0 Q0 6.4 -9.0 0Z" transform="translate(216 33) rotate(70)"/><path d="M-10.5 0 Q0 -8.0 10.5 0 Q0 8.0 -10.5 0Z" transform="translate(243 26) rotate(-40)"/><path d="M-13.5 0 Q0 -9.600000000000001 13.5 0 Q0 9.600000000000001 -13.5 0Z" transform="translate(250 40) rotate(-20)"/><path d="M-10.5 0 Q0 -8.0 10.5 0 Q0 8.0 -10.5 0Z" transform="translate(268 34) rotate(60)"/><path d="M-10.5 0 Q0 -8.0 10.5 0 Q0 8.0 -10.5 0Z" transform="translate(254 14) rotate(10)"/><path d="M-9.0 0 Q0 -6.4 9.0 0 Q0 6.4 -9.0 0Z" transform="translate(275 11) rotate(-20)"/><path d="M-12.0 0 Q0 -8.0 12.0 0 Q0 8.0 -12.0 0Z" transform="translate(288 42) rotate(-30)"/><path d="M-10.5 0 Q0 -8.0 10.5 0 Q0 8.0 -10.5 0Z" transform="translate(295 26) rotate(50)"/><path d="M-9.0 0 Q0 -6.4 9.0 0 Q0 6.4 -9.0 0Z" transform="translate(308 8) rotate(30)"/><path d="M-10.5 0 Q0 -8.0 10.5 0 Q0 8.0 -10.5 0Z" transform="translate(328 14) rotate(-50)"/><path d="M-10.5 0 Q0 -8.0 10.5 0 Q0 8.0 -10.5 0Z" transform="translate(332 30) rotate(20)"/><path d="M-9.0 0 Q0 -6.4 9.0 0 Q0 6.4 -9.0 0Z" transform="translate(355 36) rotate(60)"/><path d="M-12.0 0 Q0 -9.600000000000001 12.0 0 Q0 9.600000000000001 -12.0 0Z" transform="translate(395 26) rotate(0)"/><path d="M-10.5 0 Q0 -8.0 10.5 0 Q0 8.0 -10.5 0Z" transform="translate(403 34) rotate(-40)"/><path d="M-9.0 0 Q0 -6.4 9.0 0 Q0 6.4 -9.0 0Z" transform="translate(425 8) rotate(20)"/><path d="M-10.5 0 Q0 -8.0 10.5 0 Q0 8.0 -10.5 0Z" transform="translate(442 22) rotate(-20)"/><path d="M-9.0 0 Q0 -6.4 9.0 0 Q0 6.4 -9.0 0Z" transform="translate(450 35) rotate(50)"/><path d="M-10.5 0 Q0 -8.0 10.5 0 Q0 8.0 -10.5 0Z" transform="translate(468 10) rotate(-30)"/><path d="M-9.0 0 Q0 -6.4 9.0 0 Q0 6.4 -9.0 0Z" transform="translate(470 30) rotate(20)"/><path d="M-9.0 0 Q0 -6.4 9.0 0 Q0 6.4 -9.0 0Z" transform="translate(380 10) rotate(-10)"/><path d="M-9.0 0 Q0 -6.4 9.0 0 Q0 6.4 -9.0 0Z" transform="translate(310 44) rotate(-60)"/><path d="M-9.0 0 Q0 -6.4 9.0 0 Q0 6.4 -9.0 0Z" transform="translate(225 44) rotate(30)"/></g></svg><svg style="position:absolute;left:21px;top:11px;" width="15" height="14" viewBox="0 0 15 14"><rect x="0" y="0" width="14.5" height="14" rx="1" fill="#fff"/><rect x="2" y="1.5" width="10.5" height="5.5" fill="#217346"/><rect x="4.5" y="10" width="5" height="4" fill="#217346"/><rect x="5.5" y="10.5" width="3" height="3.5" fill="#fff"/></svg><svg style="position:absolute;left:65px;top:10px;" width="18" height="16" viewBox="0 0 18 16"><path d="M1 0.8H6.5L8.5 2.8 M1 0.8V14.5H4" stroke="#fff" stroke-width="1.2" fill="none"/><rect x="7" y="5.5" width="5.5" height="3" fill="#217346" stroke="#fff" stroke-width="1.2"/><rect x="5" y="8.5" width="12" height="4.5" rx="0.8" fill="#fff"/><rect x="7" y="11.5" width="6" height="3.5" fill="#217346" stroke="#fff" stroke-width="1.2"/></svg><svg style="position:absolute;left:114px;top:10px;" width="16" height="16" viewBox="0 0 16 16"><path d="M1 0.8H7.5L10 3.3V5 M1 0.8V14.5H6" stroke="#fff" stroke-width="1.2" fill="none"/><circle cx="8" cy="9.5" r="3.6" stroke="#fff" stroke-width="1.7" fill="none"/><path d="M10.5 12L14 15.5" stroke="#fff" stroke-width="2"/></svg><svg style="position:absolute;left:155px;top:10px;" width="16" height="15" viewBox="0 0 16 15"><path d="M6 1L2 5L6 9 M2 5H9A5 5 0 0 1 9 14H7" stroke="#fff" stroke-width="1.8" fill="none"/></svg><svg style="position:absolute;left:178px;top:16px;" width="6" height="3" viewBox="0 0 6 3"><path d="M0 0H6L3 3Z" fill="#fff"/></svg><svg style="position:absolute;left:199px;top:10px;" width="16" height="15" viewBox="0 0 16 15"><path d="M10 1L14 5L10 9 M14 5H7A5 5 0 0 0 7 14H9" stroke="#5a9a76" stroke-width="1.8" fill="none"/></svg><svg style="position:absolute;left:222px;top:16px;" width="6" height="3" viewBox="0 0 6 3"><path d="M0 0H6L3 3Z" fill="#5a9a76"/></svg><svg style="position:absolute;left:250px;top:14px;" width="7" height="8" viewBox="0 0 7 8"><rect x="0.5" y="0" width="6" height="1.2" fill="#fff"/><path d="M0 3.5H7L3.5 7.5Z" fill="#fff"/></svg><div style="left:715px;width:200px;text-align:center;top:6px;height:26px;line-height:26px;font-size:13px;color:#fff;white-space:nowrap;letter-spacing:-0.3px">工作簿3.xlsx - Excel</div><svg style="position:absolute;left:1464px;top:13px;" width="14" height="11" viewBox="0 0 14 11"><path d="M0.5 0.5H13.5V10.5H0.5Z M0.5 3.5H13.5" stroke="#fff" stroke-width="1" fill="none"/><path d="M7 9.5V5.5" stroke="#fff" stroke-width="1.2"/><path d="M4.5 7.5L7 5L9.5 7.5" stroke="#fff" stroke-width="1.2" fill="none"/></svg><div style="left:1512px;top:19px;width:9px;height:2px;background:#fff"></div><svg style="position:absolute;left:1558px;top:12px;" width="11" height="11" viewBox="0 0 11 11"><path d="M0.5 1.5H10.5V10.5H0.5Z" stroke="#fff" stroke-width="1" fill="none"/><rect x="0" y="0" width="11" height="3" fill="#fff"/></svg><svg style="position:absolute;left:1603px;top:13px;" width="12" height="10" viewBox="0 0 12 10"><path d="M1 0.5L11 9.5 M11 0.5L1 9.5" stroke="#fff" stroke-width="2" fill="none"/></svg><div style="left:64px;top:36px;width:51px;height:26px;background:#f1f1f1"></div><div style="left:-30px;width:120px;text-align:center;top:36px;height:24px;line-height:24px;font-size:12px;color:#fff;white-space:nowrap;">文件</div><div style="left:29px;width:120px;text-align:center;top:36px;height:24px;line-height:24px;font-size:12px;color:#217346;white-space:nowrap;">开始</div><div style="left:82px;width:120px;text-align:center;top:36px;height:24px;line-height:24px;font-size:12px;color:#fff;white-space:nowrap;">插入</div><div style="left:147px;width:120px;text-align:center;top:36px;height:24px;line-height:24px;font-size:12px;color:#fff;white-space:nowrap;">页面布局</div><div style="left:212px;width:120px;text-align:center;top:36px;height:24px;line-height:24px;font-size:12px;color:#fff;white-space:nowrap;">公式</div><div style="left:265px;width:120px;text-align:center;top:36px;height:24px;line-height:24px;font-size:12px;color:#fff;white-space:nowrap;">数据</div><div style="left:318px;width:120px;text-align:center;top:36px;height:24px;line-height:24px;font-size:12px;color:#fff;white-space:nowrap;">审阅</div><div style="left:370px;width:120px;text-align:center;top:36px;height:24px;line-height:24px;font-size:12px;color:#fff;white-space:nowrap;">视图</div><div style="left:436px;width:120px;text-align:center;top:36px;height:24px;line-height:24px;font-size:12px;color:#fff;white-space:nowrap;">开发工具</div><div style="left:518px;width:120px;text-align:center;top:36px;height:24px;line-height:24px;font-size:12px;color:#fff;white-space:nowrap;">PDF工具集</div><div style="left:600px;width:120px;text-align:center;top:36px;height:24px;line-height:24px;font-size:12px;color:#fff;white-space:nowrap;">金山文档</div><svg style="position:absolute;left:713px;top:41px;" width="10" height="15" viewBox="0 0 10 15"><path d="M5 1A4 4 0 0 0 2 8C3 9 3 10 3 11H7C7 10 7 9 8 8A4 4 0 0 0 5 1Z M3.5 13H6.5" stroke="#d0e2d7" stroke-width="1.3" fill="none"/></svg><div style="left:730px;top:37.0px;height:23.0px;line-height:23.0px;font-size:11.5px;color:#cfe0d6;white-space:nowrap;margin-top:0.5px">告诉我您想要做什么...</div><div style="left:1563px;top:36px;width:63px;height:26px;background:#1d6a3f"></div><svg style="position:absolute;left:1570px;top:40px;" width="16" height="17" viewBox="0 0 16 17"><circle cx="7" cy="5" r="4" stroke="#fff" stroke-width="1.3" fill="none"/><path d="M1 16C1 11 3 9 7 9 M10 13H16 M13 10V16" stroke="#fff" stroke-width="1.3" fill="none"/></svg><div style="left:1589px;top:36px;height:24px;line-height:24px;font-size:12px;color:#fff;white-space:nowrap;">共享</div><div style="left:1px;top:157px;width:1625px;height:40px;background:#e6e6e6"></div><div style="left:6px;top:167px;width:122px;height:26px;background:#fff;border:1px solid #c6c6c6"></div><div style="left:13px;top:168px;height:26px;line-height:26px;font-size:13px;color:#333;white-space:nowrap;letter-spacing:-0.3px">E11</div><svg style="position:absolute;left:116px;top:179px;" width="6" height="3" viewBox="0 0 6 3"><path d="M0 0H6L3 3Z" fill="#555"/></svg><svg style="position:absolute;left:144px;top:174px;" width="3" height="14" viewBox="0 0 3 14"><circle cx="1.5" cy="1.5" r="1" fill="#999"/><circle cx="1.5" cy="6.5" r="1" fill="#999"/><circle cx="1.5" cy="11.5" r="1" fill="#999"/></svg><div style="left:160px;top:167px;width:108px;height:26px;background:#fff;border:1px solid #c6c6c6"></div><svg style="position:absolute;left:173px;top:175px;" width="10" height="10" viewBox="0 0 10 10"><path d="M1 1L9 9 M9 1L1 9" stroke="#aaa" stroke-width="1.4"/></svg><svg style="position:absolute;left:208px;top:175px;" width="13" height="10" viewBox="0 0 13 10"><path d="M1 5L5 9L12 1" stroke="#aaa" stroke-width="1.8" fill="none"/></svg><div style="left:245px;top:168px;height:26px;line-height:26px;font-size:13px;color:#444;white-space:nowrap;font-family:'Liberation Serif',serif;font-weight:bold"><i>f</i><span style="position:static;font-size:10px"><i>x</i></span></div><div style="left:273px;top:167px;width:1353px;height:26px;background:#fff;border-top:1px solid #c6c6c6;border-bottom:1px solid #c6c6c6;border-left:1px solid #c6c6c6"></div><div style="left:284px;top:168px;height:26px;line-height:26px;font-size:13px;color:#222;white-space:nowrap;">女</div><svg style="position:absolute;left:1614px;top:177px;" width="9" height="6" viewBox="0 0 9 6"><path d="M1 1L4.5 4.5L8 1" stroke="#555" stroke-width="1.6" fill="none"/></svg>
<div style="position:absolute;left:21px;top:217px;width:1589px;height:772px;background:#fff"></div>
<div class="hl" style="top:241px"></div>
<div class="hl" style="top:266px"></div>
<div class="hl" style="top:291px"></div>
<div class="hl" style="top:316px"></div>
<div class="hl" style="top:341px"></div>
<div class="hl" style="top:366px"></div>
<div class="hl" style="top:391px"></div>
<div class="hl" style="top:416px"></div>
<div class="hl" style="top:441px"></div>
<div class="hl" style="top:466px"></div>
<div class="hl" style="top:491px"></div>
<div class="hl" style="top:516px"></div>
<div class="hl" style="top:541px"></div>
<div class="hl" style="top:566px"></div>
<div class="hl" style="top:591px"></div>
<div class="hl" style="top:616px"></div>
<div class="hl" style="top:641px"></div>
<div class="hl" style="top:666px"></div>
<div class="hl" style="top:691px"></div>
<div class="hl" style="top:716px"></div>
<div class="hl" style="top:741px"></div>
<div class="hl" style="top:766px"></div>
<div class="hl" style="top:791px"></div>
<div class="hl" style="top:816px"></div>
<div class="hl" style="top:841px"></div>
<div class="hl" style="top:866px"></div>
<div class="hl" style="top:891px"></div>
<div class="hl" style="top:916px"></div>
<div class="hl" style="top:941px"></div>
<div class="hl" style="top:966px"></div>
<div class="vl" style="left:89px;top:242px;height:747px"></div>
<div class="vl" style="left:178px;top:242px;height:747px"></div>
<div class="vl" style="left:247px;top:242px;height:747px"></div>
<div class="vl" style="left:316px;top:242px;height:747px"></div>
<div class="vl" style="left:385px;top:242px;height:747px"></div>
<div class="vl" style="left:454px;top:242px;height:747px"></div>
<div class="vl" style="left:523px;top:242px;height:747px"></div>
<div class="vl" style="left:592px;top:242px;height:747px"></div>
<div class="vl" style="left:661px;top:242px;height:747px"></div>
<div class="vl" style="left:737px;top:242px;height:747px"></div>
<div class="vl" style="left:806px;top:242px;height:747px"></div>
<div class="vl" style="left:875px;top:242px;height:747px"></div>
<div class="vl" style="left:944px;top:242px;height:747px"></div>
<div class="vl" style="left:1013px;top:242px;height:747px"></div>
<div class="vl" style="left:1116px"></div>
<div class="vl" style="left:1170px"></div>
<div class="vl" style="left:1286px"></div>
<div class="vl" style="left:1522px"></div>
<div class="vl" style="left:1591px"></div>
<div style="position:absolute;left:1px;top:217px;width:19px;height:772px;background:#e6e6e6"></div>
<div style="position:absolute;left:20px;top:205px;width:1px;height:784px;background:#ababab"></div>
<div style="position:absolute;left:1px;top:241px;width:19px;height:1px;background:#c6c6c6"></div>
<div class="rn" style="top:232px">1</div>
<div style="position:absolute;left:1px;top:266px;width:19px;height:1px;background:#c6c6c6"></div>
<div class="rn" style="top:257px">2</div>
<div style="position:absolute;left:1px;top:291px;width:19px;height:1px;background:#c6c6c6"></div>
<div class="rn" style="top:282px">3</div>
<div style="position:absolute;left:1px;top:316px;width:19px;height:1px;background:#c6c6c6"></div>
<div class="rn" style="top:307px">4</div>
<div style="position:absolute;left:1px;top:341px;width:19px;height:1px;background:#c6c6c6"></div>
<div class="rn" style="top:332px">5</div>
<div style="position:absolute;left:1px;top:366px;width:19px;height:1px;background:#c6c6c6"></div>
<div class="rn" style="top:357px">6</div>
<div style="position:absolute;left:1px;top:391px;width:19px;height:1px;background:#c6c6c6"></div>
<div class="rn" style="top:382px">7</div>
<div style="position:absolute;left:1px;top:416px;width:19px;height:1px;background:#c6c6c6"></div>
<div class="rn" style="top:407px">8</div>
<div style="position:absolute;left:1px;top:441px;width:19px;height:1px;background:#c6c6c6"></div>
<div class="rn" style="top:432px">9</div>
<div style="position:absolute;left:1px;top:466px;width:19px;height:1px;background:#c6c6c6"></div>
<div class="rn" style="top:457px">10</div>
<div style="position:absolute;left:1px;top:491px;width:19px;height:1px;background:#c6c6c6"></div>
<div class="rn" style="top:482px">11</div>
<div style="position:absolute;left:1px;top:516px;width:19px;height:1px;background:#c6c6c6"></div>
<div class="rn" style="top:507px">12</div>
<div style="position:absolute;left:1px;top:541px;width:19px;height:1px;background:#c6c6c6"></div>
<div class="rn" style="top:532px">13</div>
<div style="position:absolute;left:1px;top:566px;width:19px;height:1px;background:#c6c6c6"></div>
<div class="rn" style="top:557px">14</div>
<div style="position:absolute;left:1px;top:591px;width:19px;height:1px;background:#c6c6c6"></div>
<div class="rn" style="top:582px">15</div>
<div style="position:absolute;left:1px;top:616px;width:19px;height:1px;background:#c6c6c6"></div>
<div class="rn" style="top:607px">16</div>
<div style="position:absolute;left:1px;top:641px;width:19px;height:1px;background:#c6c6c6"></div>
<div class="rn" style="top:632px">17</div>
<div style="position:absolute;left:1px;top:666px;width:19px;height:1px;background:#c6c6c6"></div>
<div class="rn" style="top:657px">18</div>
<div style="position:absolute;left:1px;top:691px;width:19px;height:1px;background:#c6c6c6"></div>
<div class="rn" style="top:682px">19</div>
<div style="position:absolute;left:1px;top:716px;width:19px;height:1px;background:#c6c6c6"></div>
<div class="rn" style="top:707px">20</div>
<div style="position:absolute;left:1px;top:741px;width:19px;height:1px;background:#c6c6c6"></div>
<div class="rn" style="top:732px">21</div>
<div style="position:absolute;left:1px;top:766px;width:19px;height:1px;background:#c6c6c6"></div>
<div class="rn" style="top:757px">22</div>
<div style="position:absolute;left:1px;top:791px;width:19px;height:1px;background:#c6c6c6"></div>
<div class="rn" style="top:782px">23</div>
<div style="position:absolute;left:1px;top:816px;width:19px;height:1px;background:#c6c6c6"></div>
<div class="rn" style="top:807px">24</div>
<div style="position:absolute;left:1px;top:841px;width:19px;height:1px;background:#c6c6c6"></div>
<div class="rn" style="top:832px">25</div>
<div style="position:absolute;left:1px;top:866px;width:19px;height:1px;background:#c6c6c6"></div>
<div class="rn" style="top:857px">26</div>
<div style="position:absolute;left:1px;top:891px;width:19px;height:1px;background:#c6c6c6"></div>
<div class="rn" style="top:882px">27</div>
<div style="position:absolute;left:1px;top:916px;width:19px;height:1px;background:#c6c6c6"></div>
<div class="rn" style="top:907px">28</div>
<div style="position:absolute;left:1px;top:941px;width:19px;height:1px;background:#c6c6c6"></div>
<div class="rn" style="top:932px">29</div>
<div style="position:absolute;left:1px;top:966px;width:19px;height:1px;background:#c6c6c6"></div>
<div class="rn" style="top:957px">30</div>
<div style="position:absolute;left:1px;top:991px;width:19px;height:1px;background:#c6c6c6"></div>
<div class="rn" style="top:982px">31</div>
<div style="position:absolute;left:1px;top:197px;width:1612px;height:19px;background:#e6e6e6"></div>
<div style="position:absolute;left:1px;top:216px;width:1610px;height:1px;background:#ababab"></div>
<div class="ht" style="left:20px"></div>
<svg style="position:absolute;left:13px;top:209px" width="5" height="5"><path d="M5 0V5H0Z" fill="#b5b5b5"/></svg>
<div class="ht" style="left:89px"></div>
<div class="cn" style="left:20px;width:69px">A</div>
<div class="ht" style="left:178px"></div>
<div class="cn" style="left:89px;width:89px">B</div>
<div class="ht" style="left:247px"></div>
<div class="cn" style="left:178px;width:69px">C</div>
<div class="ht" style="left:316px"></div>
<div class="cn" style="left:247px;width:69px">D</div>
<div style="position:absolute;left:317px;top:205px;width:68px;height:11px;background:#d2d2d2"></div>
<div style="position:absolute;left:316px;top:215px;width:70px;height:2px;background:#217346"></div>
<div class="ht" style="left:385px"></div>
<div class="cn" style="left:316px;width:69px">E</div>
<div class="ht" style="left:454px"></div>
<div class="cn" style="left:385px;width:69px">F</div>
<div class="ht" style="left:523px"></div>
<div class="cn" style="left:454px;width:69px">G</div>
<div class="ht" style="left:592px"></div>
<div class="cn" style="left:523px;width:69px">H</div>
<div class="ht" style="left:661px"></div>
<div class="cn" style="left:592px;width:69px">I</div>
<div class="ht" style="left:737px"></div>
<div class="cn" style="left:661px;width:76px">J</div>
<div class="ht" style="left:806px"></div>
<div class="cn" style="left:737px;width:69px">K</div>
<div class="ht" style="left:875px"></div>
<div class="cn" style="left:806px;width:69px">L</div>
<div class="ht" style="left:944px"></div>
<div class="cn" style="left:875px;width:69px">M</div>
<div class="ht" style="left:1013px"></div>
<div class="cn" style="left:944px;width:69px">N</div>
<div class="ht" style="left:1114px"></div><div class="ht" style="left:1118px"></div>
<div class="cn" style="left:1013px;width:103px">O</div>
<div class="ht" style="left:1170px"></div>
<div class="cn" style="left:1117px;width:53px">Q</div>
<div class="ht" style="left:1286px"></div>
<div class="cn" style="left:1170px;width:116px">R</div>
<div class="ht" style="left:1522px"></div>
<div class="cn" style="left:1286px;width:236px">S</div>
<div class="ht" style="left:1591px"></div>
<div class="cn" style="left:1522px;width:69px">T</div>
<div class="cn" style="left:1591px;width:19px"></div>
<div class="c" style="left:20px;width:1096px;top:218px">XXX公司员工信息</div>
<div class="c" style="left:21px;width:69px;top:243px;">编号</div>
<div class="c" style="left:90px;width:89px;top:243px;">岗位</div>
<div class="c" style="left:179px;width:69px;top:243px;">工号</div>
<div class="c" style="left:248px;width:69px;top:243px;">姓名</div>
<div class="c" style="left:317px;width:69px;top:243px;">性别</div>
<div class="c" style="left:386px;width:69px;top:243px;">年龄</div>
<div class="c" style="left:455px;width:69px;top:243px;">学历</div>
<div class="c" style="left:524px;width:69px;top:243px;">省</div>
<div class="c" style="left:593px;width:69px;top:243px;">市</div>
<div class="c" style="left:662px;width:76px;top:243px;">考核成绩</div>
<div class="c" style="left:738px;width:69px;top:243px;">等级</div>
<div class="c" style="left:807px;width:69px;top:243px;">出勤天数</div>
<div class="c" style="left:876px;width:69px;top:243px;">奖金</div>
<div class="c" style="left:945px;width:69px;top:243px;">薪资</div>
<div class="c" style="left:1014px;width:103px;top:243px;">薪资高于5000</div>
<div class="c" style="left:21px;width:69px;top:268px;transform:scaleX(0.95);">A01</div>
<div class="c" style="left:90px;width:89px;top:268px;">技术员</div>
<div class="c" style="left:179px;width:69px;top:268px;transform:scaleX(0.95);">1</div>
<div class="c" style="left:248px;width:69px;top:268px;">小王</div>
<div class="c" style="left:317px;width:69px;top:268px;">女</div>
<div class="c" style="left:386px;width:69px;top:268px;transform:scaleX(0.95);">28</div>
<div class="c" style="left:455px;width:69px;top:268px;">本科</div>
<div class="c" style="left:524px;width:69px;top:268px;">湖北省</div>
<div class="c" style="left:593px;width:69px;top:268px;">武汉市</div>
<div class="c" style="left:662px;width:76px;top:268px;transform:scaleX(0.95);">60</div>
<div class="c" style="left:738px;width:69px;top:268px;">及格</div>
<div class="c" style="left:807px;width:69px;top:268px;transform:scaleX(0.95);">20</div>
<div class="c" style="left:876px;width:69px;top:268px;transform:scaleX(0.95);">0</div>
<div class="c" style="left:945px;width:69px;top:268px;transform:scaleX(0.95);">7<span style="position:static;margin:0 -1px">,</span>800</div>
<div class="c" style="left:1014px;width:103px;top:268px;transform:scaleX(0.81);">TRUE</div>
<div class="c" style="left:21px;width:69px;top:293px;transform:scaleX(0.95);">A02</div>
<div class="c" style="left:90px;width:89px;top:293px;">员工</div>
<div class="c" style="left:179px;width:69px;top:293px;transform:scaleX(0.95);">24</div>
<div class="c" style="left:248px;width:69px;top:293px;">郑二</div>
<div class="c" style="left:317px;width:69px;top:293px;">女</div>
<div class="c" style="left:386px;width:69px;top:293px;transform:scaleX(0.95);">24</div>
<div class="c" style="left:455px;width:69px;top:293px;">本科</div>
<div class="c" style="left:524px;width:69px;top:293px;">湖南省</div>
<div class="c" style="left:593px;width:69px;top:293px;">长沙市</div>
<div class="c" style="left:662px;width:76px;top:293px;transform:scaleX(0.95);">80</div>
<div class="c" style="left:738px;width:69px;top:293px;">良好</div>
<div class="c" style="left:807px;width:69px;top:293px;transform:scaleX(0.95);">21</div>
<div class="c" style="left:876px;width:69px;top:293px;transform:scaleX(0.95);">200</div>
<div class="c" style="left:945px;width:69px;top:293px;transform:scaleX(0.95);">3<span style="position:static;margin:0 -1px">,</span>900</div>
<div class="c" style="left:1014px;width:103px;top:293px;transform:scaleX(0.81);">FALSE</div>
<div class="c" style="left:21px;width:69px;top:318px;transform:scaleX(0.95);">A03</div>
<div class="c" style="left:90px;width:89px;top:318px;">员工</div>
<div class="c" style="left:179px;width:69px;top:318px;transform:scaleX(0.95);">2</div>
<div class="c" style="left:248px;width:69px;top:318px;">小张</div>
<div class="c" style="left:317px;width:69px;top:318px;">男</div>
<div class="c" style="left:386px;width:69px;top:318px;transform:scaleX(0.95);">30</div>
<div class="c" style="left:455px;width:69px;top:318px;">专科</div>
<div class="c" style="left:524px;width:69px;top:318px;">山东省</div>
<div class="c" style="left:593px;width:69px;top:318px;">青岛市</div>
<div class="c" style="left:662px;width:76px;top:318px;transform:scaleX(0.95);">90</div>
<div class="c" style="left:738px;width:69px;top:318px;">优秀</div>
<div class="c" style="left:807px;width:69px;top:318px;transform:scaleX(0.95);">21</div>
<div class="c" style="left:876px;width:69px;top:318px;transform:scaleX(0.95);">200</div>
<div class="c" style="left:945px;width:69px;top:318px;transform:scaleX(0.95);">4<span style="position:static;margin:0 -1px">,</span>100</div>
<div class="c" style="left:1014px;width:103px;top:318px;transform:scaleX(0.81);">FALSE</div>
<div class="c" style="left:21px;width:69px;top:343px;transform:scaleX(0.95);">A03</div>
<div class="c" style="left:90px;width:89px;top:343px;">技术员</div>
<div class="c" style="left:179px;width:69px;top:343px;transform:scaleX(0.95);">3</div>
<div class="c" style="left:248px;width:69px;top:343px;">陈一</div>
<div class="c" style="left:317px;width:69px;top:343px;">女</div>
<div class="c" style="left:386px;width:69px;top:343px;transform:scaleX(0.95);">22</div>
<div class="c" style="left:455px;width:69px;top:343px;">本科</div>
<div class="c" style="left:524px;width:69px;top:343px;">湖南省</div>
<div class="c" style="left:593px;width:69px;top:343px;">长沙市</div>
<div class="c" style="left:662px;width:76px;top:343px;transform:scaleX(0.95);">88</div>
<div class="c" style="left:738px;width:69px;top:343px;">良好</div>
<div class="c" style="left:807px;width:69px;top:343px;transform:scaleX(0.95);">21</div>
<div class="c" style="left:876px;width:69px;top:343px;transform:scaleX(0.95);">200</div>
<div class="c" style="left:945px;width:69px;top:343px;transform:scaleX(0.95);">4<span style="position:static;margin:0 -1px">,</span>100</div>
<div class="c" style="left:1014px;width:103px;top:343px;transform:scaleX(0.81);">FALSE</div>
<div class="c" style="left:21px;width:69px;top:368px;transform:scaleX(0.95);">A04</div>
<div class="c" style="left:90px;width:89px;top:368px;">工程师</div>
<div class="c" style="left:179px;width:69px;top:368px;transform:scaleX(0.95);">4</div>
<div class="c" style="left:248px;width:69px;top:368px;">小G</div>
<div class="c" style="left:317px;width:69px;top:368px;">女</div>
<div class="c" style="left:386px;width:69px;top:368px;transform:scaleX(0.95);">30</div>
<div class="c" style="left:455px;width:69px;top:368px;">硕士</div>
<div class="c" style="left:524px;width:69px;top:368px;">吉林省</div>
<div class="c" style="left:593px;width:69px;top:368px;">长春市</div>
<div class="c" style="left:662px;width:76px;top:368px;transform:scaleX(0.95);">77</div>
<div class="c" style="left:738px;width:69px;top:368px;">及格</div>
<div class="c" style="left:807px;width:69px;top:368px;transform:scaleX(0.95);">21</div>
<div class="c" style="left:876px;width:69px;top:368px;transform:scaleX(0.95);">0</div>
<div class="c" style="left:945px;width:69px;top:368px;transform:scaleX(0.95);">6<span style="position:static;margin:0 -1px">,</span>200</div>
<div class="c" style="left:1014px;width:103px;top:368px;transform:scaleX(0.81);">TRUE</div>
<div class="c" style="left:21px;width:69px;top:393px;transform:scaleX(0.95);">A05</div>
<div class="c" style="left:90px;width:89px;top:393px;">工程师</div>
<div class="c" style="left:179px;width:69px;top:393px;transform:scaleX(0.95);">5</div>
<div class="c" style="left:248px;width:69px;top:393px;">小F</div>
<div class="c" style="left:317px;width:69px;top:393px;">女</div>
<div class="c" style="left:386px;width:69px;top:393px;transform:scaleX(0.95);">22</div>
<div class="c" style="left:455px;width:69px;top:393px;">专科</div>
<div class="c" style="left:524px;width:69px;top:393px;">辽宁省</div>
<div class="c" style="left:593px;width:69px;top:393px;">沈阳市</div>
<div class="c" style="left:662px;width:76px;top:393px;transform:scaleX(0.95);">76</div>
<div class="c" style="left:738px;width:69px;top:393px;">及格</div>
<div class="c" style="left:807px;width:69px;top:393px;transform:scaleX(0.95);">21</div>
<div class="c" style="left:876px;width:69px;top:393px;transform:scaleX(0.95);">0</div>
<div class="c" style="left:945px;width:69px;top:393px;transform:scaleX(0.95);">6<span style="position:static;margin:0 -1px">,</span>100</div>
<div class="c" style="left:1014px;width:103px;top:393px;transform:scaleX(0.81);">TRUE</div>
<div class="c" style="left:21px;width:69px;top:418px;transform:scaleX(0.95);">A06</div>
<div class="c" style="left:90px;width:89px;top:418px;">助工</div>
<div class="c" style="left:179px;width:69px;top:418px;transform:scaleX(0.95);">6</div>
<div class="c" style="left:248px;width:69px;top:418px;">小明</div>
<div class="c" style="left:317px;width:69px;top:418px;">男</div>
<div class="c" style="left:386px;width:69px;top:418px;transform:scaleX(0.95);">28</div>
<div class="c" style="left:455px;width:69px;top:418px;">本科</div>
<div class="c" style="left:524px;width:69px;top:418px;">江苏省</div>
<div class="c" style="left:593px;width:69px;top:418px;">南京市</div>
<div class="c" style="left:662px;width:76px;top:418px;transform:scaleX(0.95);">50</div>
<div class="c" style="left:738px;width:69px;top:418px;">不及格</div>
<div class="c" style="left:807px;width:69px;top:418px;transform:scaleX(0.95);">21</div>
<div class="c" style="left:876px;width:69px;top:418px;transform:scaleX(0.95);">0</div>
<div class="c" style="left:945px;width:69px;top:418px;transform:scaleX(0.95);">4<span style="position:static;margin:0 -1px">,</span>900</div>
<div class="c" style="left:1014px;width:103px;top:418px;transform:scaleX(0.81);">FALSE</div>
<div class="c" style="left:21px;width:69px;top:443px;transform:scaleX(0.95);">A07</div>
<div class="c" style="left:90px;width:89px;top:443px;">员工</div>
<div class="c" style="left:179px;width:69px;top:443px;transform:scaleX(0.95);">7</div>
<div class="c" style="left:248px;width:69px;top:443px;">李四</div>
<div class="c" style="left:317px;width:69px;top:443px;">男</div>
<div class="c" style="left:386px;width:69px;top:443px;transform:scaleX(0.95);">36</div>
<div class="c" style="left:455px;width:69px;top:443px;">本科</div>
<div class="c" style="left:524px;width:69px;top:443px;">四川省</div>
<div class="c" style="left:593px;width:69px;top:443px;">成都市</div>
<div class="c" style="left:662px;width:76px;top:443px;transform:scaleX(0.95);">62</div>
<div class="c" style="left:738px;width:69px;top:443px;">及格</div>
<div class="c" style="left:807px;width:69px;top:443px;transform:scaleX(0.95);">22</div>
<div class="c" style="left:876px;width:69px;top:443px;transform:scaleX(0.95);">0</div>
<div class="c" style="left:945px;width:69px;top:443px;transform:scaleX(0.95);">7<span style="position:static;margin:0 -1px">,</span>000</div>
<div class="c" style="left:1014px;width:103px;top:443px;transform:scaleX(0.81);">TRUE</div>
<div class="c" style="left:21px;width:69px;top:468px;transform:scaleX(0.95);">A08</div>
<div class="c" style="left:90px;width:89px;top:468px;">员工</div>
<div class="c" style="left:179px;width:69px;top:468px;transform:scaleX(0.95);">8</div>
<div class="c" style="left:248px;width:69px;top:468px;">小A</div>
<div class="c" style="left:317px;width:69px;top:468px;">女</div>
<div class="c" style="left:386px;width:69px;top:468px;transform:scaleX(0.95);">22</div>
<div class="c" style="left:455px;width:69px;top:468px;">本科</div>
<div class="c" style="left:524px;width:69px;top:468px;">湖北省</div>
<div class="c" style="left:593px;width:69px;top:468px;">武汉市</div>
<div class="c" style="left:662px;width:76px;top:468px;transform:scaleX(0.95);">66</div>
<div class="c" style="left:738px;width:69px;top:468px;">及格</div>
<div class="c" style="left:807px;width:69px;top:468px;transform:scaleX(0.95);">22</div>
<div class="c" style="left:876px;width:69px;top:468px;transform:scaleX(0.95);">0</div>
<div class="c" style="left:945px;width:69px;top:468px;transform:scaleX(0.95);">4<span style="position:static;margin:0 -1px">,</span>100</div>
<div class="c" style="left:1014px;width:103px;top:468px;transform:scaleX(0.81);">FALSE</div>
<div class="c" style="left:21px;width:69px;top:493px;transform:scaleX(0.95);">A09</div>
<div class="c" style="left:90px;width:89px;top:493px;">员工</div>
<div class="c" style="left:179px;width:69px;top:493px;transform:scaleX(0.95);">9</div>
<div class="c" style="left:248px;width:69px;top:493px;">赵六</div>
<div class="c" style="left:317px;width:69px;top:493px;">女</div>
<div class="c" style="left:386px;width:69px;top:493px;transform:scaleX(0.95);">22</div>
<div class="c" style="left:455px;width:69px;top:493px;">本科</div>
<div class="c" style="left:524px;width:69px;top:493px;">吉林省</div>
<div class="c" style="left:593px;width:69px;top:493px;">长春市</div>
<div class="c" style="left:662px;width:76px;top:493px;transform:scaleX(0.95);">80</div>
<div class="c" style="left:738px;width:69px;top:493px;">良好</div>
<div class="c" style="left:807px;width:69px;top:493px;transform:scaleX(0.95);">22</div>
<div class="c" style="left:876px;width:69px;top:493px;transform:scaleX(0.95);">200</div>
<div class="c" style="left:945px;width:69px;top:493px;transform:scaleX(0.95);">4<span style="position:static;margin:0 -1px">,</span>600</div>
<div class="c" style="left:1014px;width:103px;top:493px;transform:scaleX(0.81);">FALSE</div>
<div class="c" style="left:21px;width:69px;top:518px;transform:scaleX(0.95);">A10</div>
<div class="c" style="left:90px;width:89px;top:518px;">技术员</div>
<div class="c" style="left:179px;width:69px;top:518px;transform:scaleX(0.95);">10</div>
<div class="c" style="left:248px;width:69px;top:518px;">王五</div>
<div class="c" style="left:317px;width:69px;top:518px;">女</div>
<div class="c" style="left:386px;width:69px;top:518px;transform:scaleX(0.95);">33</div>
<div class="c" style="left:455px;width:69px;top:518px;">硕士</div>
<div class="c" style="left:524px;width:69px;top:518px;">四川省</div>
<div class="c" style="left:593px;width:69px;top:518px;">成都市</div>
<div class="c" style="left:662px;width:76px;top:518px;transform:scaleX(0.95);">89</div>
<div class="c" style="left:738px;width:69px;top:518px;">良好</div>
<div class="c" style="left:807px;width:69px;top:518px;transform:scaleX(0.95);">22</div>
<div class="c" style="left:876px;width:69px;top:518px;transform:scaleX(0.95);">200</div>
<div class="c" style="left:945px;width:69px;top:518px;transform:scaleX(0.95);">4<span style="position:static;margin:0 -1px">,</span>300</div>
<div class="c" style="left:1014px;width:103px;top:518px;transform:scaleX(0.81);">FALSE</div>
<div class="c" style="left:21px;width:69px;top:543px;transform:scaleX(0.95);">A11</div>
<div class="c" style="left:90px;width:89px;top:543px;">员工</div>
<div class="c" style="left:179px;width:69px;top:543px;transform:scaleX(0.95);">11</div>
<div class="c" style="left:248px;width:69px;top:543px;">张三</div>
<div class="c" style="left:317px;width:69px;top:543px;">女</div>
<div class="c" style="left:386px;width:69px;top:543px;transform:scaleX(0.95);">25</div>
<div class="c" style="left:455px;width:69px;top:543px;">专科</div>
<div class="c" style="left:524px;width:69px;top:543px;">吉林省</div>
<div class="c" style="left:593px;width:69px;top:543px;">长春市</div>
<div class="c" style="left:662px;width:76px;top:543px;transform:scaleX(0.95);">99</div>
<div class="c" style="left:738px;width:69px;top:543px;">优秀</div>
<div class="c" style="left:807px;width:69px;top:543px;transform:scaleX(0.95);">22</div>
<div class="c" style="left:876px;width:69px;top:543px;transform:scaleX(0.95);">200</div>
<div class="c" style="left:945px;width:69px;top:543px;transform:scaleX(0.95);">5<span style="position:static;margin:0 -1px">,</span>100</div>
<div class="c" style="left:1014px;width:103px;top:543px;transform:scaleX(0.81);">TRUE</div>
<div class="c" style="left:21px;width:69px;top:568px;transform:scaleX(0.95);">A12</div>
<div class="c" style="left:90px;width:89px;top:568px;">员工</div>
<div class="c" style="left:179px;width:69px;top:568px;transform:scaleX(0.95);">12</div>
<div class="c" style="left:248px;width:69px;top:568px;">小E</div>
<div class="c" style="left:317px;width:69px;top:568px;">男</div>
<div class="c" style="left:386px;width:69px;top:568px;transform:scaleX(0.95);">25</div>
<div class="c" style="left:455px;width:69px;top:568px;">本科</div>
<div class="c" style="left:524px;width:69px;top:568px;">吉林省</div>
<div class="c" style="left:593px;width:69px;top:568px;">长春市</div>
<div class="c" style="left:662px;width:76px;top:568px;transform:scaleX(0.95);">67</div>
<div class="c" style="left:738px;width:69px;top:568px;">及格</div>
<div class="c" style="left:807px;width:69px;top:568px;transform:scaleX(0.95);">22</div>
<div class="c" style="left:876px;width:69px;top:568px;transform:scaleX(0.95);">0</div>
<div class="c" style="left:945px;width:69px;top:568px;transform:scaleX(0.95);">4<span style="position:static;margin:0 -1px">,</span>400</div>
<div class="c" style="left:1014px;width:103px;top:568px;transform:scaleX(0.81);">FALSE</div>
<div class="c" style="left:21px;width:69px;top:593px;transform:scaleX(0.95);">A14</div>
<div class="c" style="left:90px;width:89px;top:593px;">技术员</div>
<div class="c" style="left:179px;width:69px;top:593px;transform:scaleX(0.95);">13</div>
<div class="c" style="left:248px;width:69px;top:593px;">小D</div>
<div class="c" style="left:317px;width:69px;top:593px;">女</div>
<div class="c" style="left:386px;width:69px;top:593px;transform:scaleX(0.95);">36</div>
<div class="c" style="left:455px;width:69px;top:593px;">硕士</div>
<div class="c" style="left:524px;width:69px;top:593px;">四川省</div>
<div class="c" style="left:593px;width:69px;top:593px;">成都市</div>
<div class="c" style="left:662px;width:76px;top:593px;transform:scaleX(0.95);">78</div>
<div class="c" style="left:738px;width:69px;top:593px;">及格</div>
<div class="c" style="left:807px;width:69px;top:593px;transform:scaleX(0.95);">23</div>
<div class="c" style="left:876px;width:69px;top:593px;transform:scaleX(0.95);">200</div>
<div class="c" style="left:945px;width:69px;top:593px;transform:scaleX(0.95);">5<span style="position:static;margin:0 -1px">,</span>100</div>
<div class="c" style="left:1014px;width:103px;top:593px;transform:scaleX(0.81);">TRUE</div>
<div class="c" style="left:21px;width:69px;top:618px;transform:scaleX(0.95);">A15</div>
<div class="c" style="left:90px;width:89px;top:618px;">技术员</div>
<div class="c" style="left:179px;width:69px;top:618px;transform:scaleX(0.95);">14</div>
<div class="c" style="left:248px;width:69px;top:618px;">杨十四</div>
<div class="c" style="left:317px;width:69px;top:618px;">女</div>
<div class="c" style="left:386px;width:69px;top:618px;transform:scaleX(0.95);">33</div>
<div class="c" style="left:455px;width:69px;top:618px;">专科</div>
<div class="c" style="left:524px;width:69px;top:618px;">湖北省</div>
<div class="c" style="left:593px;width:69px;top:618px;">武汉市</div>
<div class="c" style="left:662px;width:76px;top:618px;transform:scaleX(0.95);">99</div>
<div class="c" style="left:738px;width:69px;top:618px;">优秀</div>
<div class="c" style="left:807px;width:69px;top:618px;transform:scaleX(0.95);">23</div>
<div class="c" style="left:876px;width:69px;top:618px;transform:scaleX(0.95);">200</div>
<div class="c" style="left:945px;width:69px;top:618px;transform:scaleX(0.95);">5<span style="position:static;margin:0 -1px">,</span>300</div>
<div class="c" style="left:1014px;width:103px;top:618px;transform:scaleX(0.81);">TRUE</div>
<div class="c" style="left:21px;width:69px;top:643px;transform:scaleX(0.95);">A16</div>
<div class="c" style="left:90px;width:89px;top:643px;">员工</div>
<div class="c" style="left:179px;width:69px;top:643px;transform:scaleX(0.95);">15</div>
<div class="c" style="left:248px;width:69px;top:643px;">小C</div>
<div class="c" style="left:317px;width:69px;top:643px;">男</div>
<div class="c" style="left:386px;width:69px;top:643px;transform:scaleX(0.95);">22</div>
<div class="c" style="left:455px;width:69px;top:643px;">硕士</div>
<div class="c" style="left:524px;width:69px;top:643px;">湖南省</div>
<div class="c" style="left:593px;width:69px;top:643px;">长沙市</div>
<div class="c" style="left:662px;width:76px;top:643px;transform:scaleX(0.95);">76</div>
<div class="c" style="left:738px;width:69px;top:643px;">及格</div>
<div class="c" style="left:807px;width:69px;top:643px;transform:scaleX(0.95);">23</div>
<div class="c" style="left:876px;width:69px;top:643px;transform:scaleX(0.95);">200</div>
<div class="c" style="left:945px;width:69px;top:643px;transform:scaleX(0.95);">5<span style="position:static;margin:0 -1px">,</span>000</div>
<div class="c" style="left:1014px;width:103px;top:643px;transform:scaleX(0.81);">FALSE</div>
<div class="c" style="left:21px;width:69px;top:668px;transform:scaleX(0.95);">A17</div>
<div class="c" style="left:90px;width:89px;top:668px;">技术员</div>
<div class="c" style="left:179px;width:69px;top:668px;transform:scaleX(0.95);">16</div>
<div class="c" style="left:248px;width:69px;top:668px;">李六</div>
<div class="c" style="left:317px;width:69px;top:668px;">女</div>
<div class="c" style="left:386px;width:69px;top:668px;transform:scaleX(0.95);">28</div>
<div class="c" style="left:455px;width:69px;top:668px;">硕士</div>
<div class="c" style="left:524px;width:69px;top:668px;">辽宁省</div>
<div class="c" style="left:593px;width:69px;top:668px;">沈阳市</div>
<div class="c" style="left:662px;width:76px;top:668px;transform:scaleX(0.95);">85</div>
<div class="c" style="left:738px;width:69px;top:668px;">良好</div>
<div class="c" style="left:807px;width:69px;top:668px;transform:scaleX(0.95);">23</div>
<div class="c" style="left:876px;width:69px;top:668px;transform:scaleX(0.95);">200</div>
<div class="c" style="left:945px;width:69px;top:668px;transform:scaleX(0.95);">8<span style="position:static;margin:0 -1px">,</span>000</div>
<div class="c" style="left:1014px;width:103px;top:668px;transform:scaleX(0.81);">TRUE</div>
<div class="c" style="left:21px;width:69px;top:693px;transform:scaleX(0.95);">A18</div>
<div class="c" style="left:90px;width:89px;top:693px;">技术员</div>
<div class="c" style="left:179px;width:69px;top:693px;transform:scaleX(0.95);">17</div>
<div class="c" style="left:248px;width:69px;top:693px;">小B</div>
<div class="c" style="left:317px;width:69px;top:693px;">男</div>
<div class="c" style="left:386px;width:69px;top:693px;transform:scaleX(0.95);">22</div>
<div class="c" style="left:455px;width:69px;top:693px;">专科</div>
<div class="c" style="left:524px;width:69px;top:693px;">江苏省</div>
<div class="c" style="left:593px;width:69px;top:693px;">南京市</div>
<div class="c" style="left:662px;width:76px;top:693px;transform:scaleX(0.95);">66</div>
<div class="c" style="left:738px;width:69px;top:693px;">及格</div>
<div class="c" style="left:807px;width:69px;top:693px;transform:scaleX(0.95);">24</div>
<div class="c" style="left:876px;width:69px;top:693px;transform:scaleX(0.95);">200</div>
<div class="c" style="left:945px;width:69px;top:693px;transform:scaleX(0.95);">4<span style="position:static;margin:0 -1px">,</span>600</div>
<div class="c" style="left:1014px;width:103px;top:693px;transform:scaleX(0.81);">FALSE</div>
<div class="c" style="left:21px;width:69px;top:718px;transform:scaleX(0.95);">A19</div>
<div class="c" style="left:90px;width:89px;top:718px;">员工</div>
<div class="c" style="left:179px;width:69px;top:718px;transform:scaleX(0.95);">18</div>
<div class="c" style="left:248px;width:69px;top:718px;">冯十</div>
<div class="c" style="left:317px;width:69px;top:718px;">男</div>
<div class="c" style="left:386px;width:69px;top:718px;transform:scaleX(0.95);">28</div>
<div class="c" style="left:455px;width:69px;top:718px;">专科</div>
<div class="c" style="left:524px;width:69px;top:718px;">四川省</div>
<div class="c" style="left:593px;width:69px;top:718px;">成都市</div>
<div class="c" style="left:662px;width:76px;top:718px;transform:scaleX(0.95);">64</div>
<div class="c" style="left:738px;width:69px;top:718px;">及格</div>
<div class="c" style="left:807px;width:69px;top:718px;transform:scaleX(0.95);">24</div>
<div class="c" style="left:876px;width:69px;top:718px;transform:scaleX(0.95);">200</div>
<div class="c" style="left:945px;width:69px;top:718px;transform:scaleX(0.95);">5<span style="position:static;margin:0 -1px">,</span>400</div>
<div class="c" style="left:1014px;width:103px;top:718px;transform:scaleX(0.81);">TRUE</div>
<div class="c" style="left:21px;width:69px;top:743px;transform:scaleX(0.95);">A20</div>
<div class="c" style="left:90px;width:89px;top:743px;">技术员</div>
<div class="c" style="left:179px;width:69px;top:743px;transform:scaleX(0.95);">19</div>
<div class="c" style="left:248px;width:69px;top:743px;">吴九</div>
<div class="c" style="left:317px;width:69px;top:743px;">女</div>
<div class="c" style="left:386px;width:69px;top:743px;transform:scaleX(0.95);">22</div>
<div class="c" style="left:455px;width:69px;top:743px;">硕士</div>
<div class="c" style="left:524px;width:69px;top:743px;">福建省</div>
<div class="c" style="left:593px;width:69px;top:743px;">厦门市</div>
<div class="c" style="left:662px;width:76px;top:743px;transform:scaleX(0.95);">57</div>
<div class="c" style="left:738px;width:69px;top:743px;">不及格</div>
<div class="c" style="left:807px;width:69px;top:743px;transform:scaleX(0.95);">25</div>
<div class="c" style="left:876px;width:69px;top:743px;transform:scaleX(0.95);">200</div>
<div class="c" style="left:945px;width:69px;top:743px;transform:scaleX(0.95);">9<span style="position:static;margin:0 -1px">,</span>000</div>
<div class="c" style="left:1014px;width:103px;top:743px;transform:scaleX(0.81);">TRUE</div>
<div class="c" style="left:21px;width:69px;top:768px;transform:scaleX(0.95);">A21</div>
<div class="c" style="left:90px;width:89px;top:768px;">技术员</div>
<div class="c" style="left:179px;width:69px;top:768px;transform:scaleX(0.95);">20</div>
<div class="c" style="left:248px;width:69px;top:768px;">小红</div>
<div class="c" style="left:317px;width:69px;top:768px;">男</div>
<div class="c" style="left:386px;width:69px;top:768px;transform:scaleX(0.95);">26</div>
<div class="c" style="left:455px;width:69px;top:768px;">专科</div>
<div class="c" style="left:524px;width:69px;top:768px;">江苏省</div>
<div class="c" style="left:593px;width:69px;top:768px;">南京市</div>
<div class="c" style="left:662px;width:76px;top:768px;transform:scaleX(0.95);">78</div>
<div class="c" style="left:738px;width:69px;top:768px;">及格</div>
<div class="c" style="left:807px;width:69px;top:768px;transform:scaleX(0.95);">21</div>
<div class="c" style="left:876px;width:69px;top:768px;transform:scaleX(0.95);">0</div>
<div class="c" style="left:945px;width:69px;top:768px;transform:scaleX(0.95);">5<span style="position:static;margin:0 -1px">,</span>900</div>
<div class="c" style="left:1014px;width:103px;top:768px;transform:scaleX(0.81);">TRUE</div>
<div class="c" style="left:21px;width:69px;top:793px;transform:scaleX(0.95);">A22</div>
<div class="c" style="left:90px;width:89px;top:793px;">助工</div>
<div class="c" style="left:179px;width:69px;top:793px;transform:scaleX(0.95);">21</div>
<div class="c" style="left:248px;width:69px;top:793px;">孙七</div>
<div class="c" style="left:317px;width:69px;top:793px;">男</div>
<div class="c" style="left:386px;width:69px;top:793px;transform:scaleX(0.95);">30</div>
<div class="c" style="left:455px;width:69px;top:793px;">本科</div>
<div class="c" style="left:524px;width:69px;top:793px;">山东省</div>
<div class="c" style="left:593px;width:69px;top:793px;">青岛市</div>
<div class="c" style="left:662px;width:76px;top:793px;transform:scaleX(0.95);">88</div>
<div class="c" style="left:738px;width:69px;top:793px;">良好</div>
<div class="c" style="left:807px;width:69px;top:793px;transform:scaleX(0.95);">26</div>
<div class="c" style="left:876px;width:69px;top:793px;transform:scaleX(0.95);">200</div>
<div class="c" style="left:945px;width:69px;top:793px;transform:scaleX(0.95);">4<span style="position:static;margin:0 -1px">,</span>900</div>
<div class="c" style="left:1014px;width:103px;top:793px;transform:scaleX(0.81);">FALSE</div>
<div class="c" style="left:21px;width:69px;top:818px;transform:scaleX(0.95);">A23</div>
<div class="c" style="left:90px;width:89px;top:818px;">技术员</div>
<div class="c" style="left:179px;width:69px;top:818px;transform:scaleX(0.95);">22</div>
<div class="c" style="left:248px;width:69px;top:818px;">小李</div>
<div class="c" style="left:317px;width:69px;top:818px;">男</div>
<div class="c" style="left:386px;width:69px;top:818px;transform:scaleX(0.95);">22</div>
<div class="c" style="left:455px;width:69px;top:818px;">硕士</div>
<div class="c" style="left:524px;width:69px;top:818px;">山东省</div>
<div class="c" style="left:593px;width:69px;top:818px;">青岛市</div>
<div class="c" style="left:662px;width:76px;top:818px;transform:scaleX(0.95);">67</div>
<div class="c" style="left:738px;width:69px;top:818px;">及格</div>
<div class="c" style="left:807px;width:69px;top:818px;transform:scaleX(0.95);">26</div>
<div class="c" style="left:876px;width:69px;top:818px;transform:scaleX(0.95);">200</div>
<div class="c" style="left:945px;width:69px;top:818px;transform:scaleX(0.95);">6<span style="position:static;margin:0 -1px">,</span>000</div>
<div class="c" style="left:1014px;width:103px;top:818px;transform:scaleX(0.81);">TRUE</div>
<div class="c" style="left:21px;width:69px;top:843px;transform:scaleX(0.95);">A24</div>
<div class="c" style="left:90px;width:89px;top:843px;">工程师</div>
<div class="c" style="left:179px;width:69px;top:843px;transform:scaleX(0.95);">23</div>
<div class="c" style="left:248px;width:69px;top:843px;">小韦</div>
<div class="c" style="left:317px;width:69px;top:843px;">男</div>
<div class="c" style="left:386px;width:69px;top:843px;transform:scaleX(0.95);">36</div>
<div class="c" style="left:455px;width:69px;top:843px;">硕士</div>
<div class="c" style="left:524px;width:69px;top:843px;">福建省</div>
<div class="c" style="left:593px;width:69px;top:843px;">厦门市</div>
<div class="c" style="left:662px;width:76px;top:843px;transform:scaleX(0.95);">78</div>
<div class="c" style="left:738px;width:69px;top:843px;">及格</div>
<div class="c" style="left:807px;width:69px;top:843px;transform:scaleX(0.95);">28</div>
<div class="c" style="left:876px;width:69px;top:843px;transform:scaleX(0.95);">200</div>
<div class="c" style="left:945px;width:69px;top:843px;transform:scaleX(0.95);">10<span style="position:static;margin:0 -1px">,</span>100</div>
<div class="c" style="left:1014px;width:103px;top:843px;transform:scaleX(0.81);">TRUE</div>
<div class="c b" style="left:1170px;width:116px;top:318px">年龄段</div>
<div class="c b" style="left:1286px;width:236px;top:318px">人数</div>
<div class="c b m" style="left:1170px;width:116px;top:343px">20–30</div>
<div class="c b m" style="left:1286px;width:236px;top:343px">16</div>
<div class="c b m" style="left:1170px;width:116px;top:368px">30–40</div>
<div class="c b m" style="left:1286px;width:236px;top:368px">8</div>
<div class="c b" style="left:1170px;width:116px;top:493px">性别</div>
<div class="c b" style="left:1286px;width:236px;top:493px">人数</div>
<div class="c b" style="left:1170px;width:116px;top:518px">男</div>
<div class="c b" style="left:1170px;width:116px;top:543px">女</div>
<div style="position:absolute;left:1px;top:467px;width:19px;height:24px;background:#d2d2d2"></div>
<div class="rn" style="top:482px;color:#217346">11</div>
<div style="position:absolute;left:19px;top:466px;width:2px;height:26px;background:#217346"></div>
<div style="position:absolute;left:315px;top:465px;width:68px;height:24px;border:2px solid #217346"></div>
<div style="position:absolute;left:381px;top:487px;width:7px;height:7px;background:#fff"></div>
<div style="position:absolute;left:383px;top:489px;width:5px;height:5px;background:#217346"></div>
<svg style="position:absolute;left:368px;top:433px" width="16" height="16"><path d="M5 1H10V5H14V10H10V14H5V10H1V5H5Z" fill="#000"/><path d="M4 0H9V4H13V9H9V13H4V9H0V4H4Z" fill="#000"/><path d="M5 1H8V5H12V8H8V12H5V8H1V5H5Z" fill="#fff"/></svg>
<div style="left:1610px;top:197px;width:16px;height:792px;background:#e6e6e6"></div><div style="left:1610px;top:216px;width:1px;height:773px;background:#ababab"></div><div style="left:1613px;top:207px;width:13px;height:14px;background:#fff;border:1px solid #c6c6c6;border-right:none"></div><svg style="position:absolute;left:1615px;top:211px;" width="10" height="6" viewBox="0 0 10 6"><path d="M0 6H10L5 0Z" fill="#777"/></svg><div style="left:1613px;top:222px;width:13px;height:185px;background:#fff;border:1px solid #c6c6c6;border-right:none"></div><div style="left:1613px;top:975px;width:13px;height:13px;background:#f1f1f1"></div><svg style="position:absolute;left:1615px;top:979px;" width="10" height="6" viewBox="0 0 10 6"><path d="M0 0H10L5 6Z" fill="#777"/></svg><div style="left:1px;top:989px;width:1625px;height:28px;background:#e6e6e6"></div><div style="left:1px;top:989px;width:1625px;height:1px;background:#ababab"></div><div style="left:1px;top:1017px;width:1625px;height:1px;background:#c6c6c6"></div><svg style="position:absolute;left:26px;top:997px;" width="6" height="10" viewBox="0 0 6 10"><path d="M6 0V10L0 5Z" fill="#bbb"/></svg><svg style="position:absolute;left:55px;top:997px;" width="6" height="10" viewBox="0 0 6 10"><path d="M0 0V10L6 5Z" fill="#bbb"/></svg><div style="left:101px;top:993px;width:1px;height:20px;background:#a0a0a0"></div><div style="left:164px;top:993px;width:1px;height:20px;background:#a0a0a0"></div><div style="left:227px;top:993px;width:1px;height:20px;background:#a0a0a0"></div><div style="left:482px;top:993px;width:1px;height:20px;background:#a0a0a0"></div><div style="left:597px;top:993px;width:1px;height:20px;background:#a0a0a0"></div><div style="left:666px;top:993px;width:1px;height:20px;background:#a0a0a0"></div><div style="left:735px;top:993px;width:1px;height:20px;background:#a0a0a0"></div><div style="left:804px;top:993px;width:1px;height:20px;background:#a0a0a0"></div><div style="left:873px;top:993px;width:1px;height:20px;background:#a0a0a0"></div><div style="left:930px;top:993px;width:1px;height:20px;background:#a0a0a0"></div><div style="left:73px;width:120px;text-align:center;top:988px;height:26px;line-height:26px;font-size:13px;color:#444;white-space:nowrap;">田字格</div><div style="left:136px;width:120px;text-align:center;top:988px;height:26px;line-height:26px;font-size:13px;color:#444;white-space:nowrap;">成绩表</div><div style="left:230px;top:992px;width:58px;height:21px;background:#f4b183"></div><div style="left:199px;width:120px;text-align:center;top:988px;height:26px;line-height:26px;font-size:13px;color:#222;white-space:nowrap;">课程表</div><div style="left:290px;top:989px;width:76px;height:24px;background:#fff;border-left:1px solid #ababab;border-right:1px solid #ababab"></div><div style="left:291px;top:989px;width:75px;height:1px;background:#fff"></div><div style="left:290px;top:1011px;width:77px;height:2px;background:#217346"></div><div style="left:268px;width:120px;text-align:center;top:988px;height:26px;line-height:26px;font-size:13px;color:#217346;white-space:nowrap;">员工信息</div><div style="left:368px;top:992px;width:112px;height:21px;background:#bdd7ee"></div><div style="left:364px;width:120px;text-align:center;top:988px;height:26px;line-height:26px;font-size:13px;color:#222;white-space:nowrap;">XXX公司销售额</div><div style="left:469px;width:140px;text-align:center;top:988px;height:26px;line-height:26px;font-size:13px;color:#444;white-space:nowrap;">数据透视表教程</div><div style="left:571px;width:120px;text-align:center;top:987.5px;height:27.0px;line-height:27.0px;font-size:13.5px;color:#444;white-space:nowrap;margin-top:1px">Sheet5</div><div style="left:640px;width:120px;text-align:center;top:987.5px;height:27.0px;line-height:27.0px;font-size:13.5px;color:#444;white-space:nowrap;margin-top:1px">Sheet6</div><div style="left:709px;width:120px;text-align:center;top:987.5px;height:27.0px;line-height:27.0px;font-size:13.5px;color:#444;white-space:nowrap;margin-top:1px">Sheet7</div><div style="left:778px;width:120px;text-align:center;top:987.5px;height:27.0px;line-height:27.0px;font-size:13.5px;color:#444;white-space:nowrap;margin-top:1px">Sheet1</div><div style="left:842px;width:120px;text-align:center;top:987.5px;height:27.0px;line-height:27.0px;font-size:13.5px;color:#444;white-space:nowrap;margin-top:1px">work</div><svg style="position:absolute;left:963px;top:993px;" width="18" height="18" viewBox="0 0 18 18"><circle cx="9" cy="9" r="7.5" fill="none" stroke="#777" stroke-width="1.3"/><path d="M9 5V13 M5 9H13" stroke="#555" stroke-width="1.6"/></svg><svg style="position:absolute;left:1107px;top:997px;" width="3" height="12" viewBox="0 0 3 12"><circle cx="1.5" cy="1.5" r="1" fill="#999"/><circle cx="1.5" cy="6" r="1" fill="#999"/><circle cx="1.5" cy="10.5" r="1" fill="#999"/></svg><div style="left:1125px;top:996px;width:485px;height:15px;background:#dadada"></div><div style="left:1125px;top:996px;width:14px;height:13px;background:#fff;border:1px solid #ababab"></div><svg style="position:absolute;left:1129px;top:999px;" width="5" height="8" viewBox="0 0 5 8"><path d="M5 0V8L0 4Z" fill="#555"/></svg><div style="left:1140px;top:996px;width:17px;height:13px;background:#fff;border:1px solid #ababab;border-left:none"></div><svg style="position:absolute;left:1601px;top:999px;" width="5" height="8" viewBox="0 0 5 8"><path d="M0 0V8L5 4Z" fill="#555"/></svg><div style="left:1px;top:1018px;width:1625px;height:21px;background:#f1f1f1"></div><div style="left:8px;top:1015px;height:24px;line-height:24px;font-size:12px;color:#444;white-space:nowrap;">就绪</div><div style="left:51px;top:1015px;height:24px;line-height:24px;font-size:12px;color:#444;white-space:nowrap;">数字</div><svg style="position:absolute;left:92px;top:1021px;" width="14" height="13" viewBox="0 0 14 13"><circle cx="3" cy="3" r="2.5" fill="#777"/><path d="M6 1.5H13V12.5H1.5V7 M1.5 7H13 M1.5 10H13 M5 7V12.5 M9 7V12.5" stroke="#777" fill="none"/></svg><div style="left:1331px;top:1018px;width:38px;height:21px;background:#c6c6c6"></div><svg style="position:absolute;left:1343px;top:1021px;" width="14" height="14" viewBox="0 0 14 14"><path d="M0.5 0.5H12.5V12.5H0.5Z M0.5 4.5H12.5 M0.5 8.5H12.5 M4.5 0.5V12.5 M8.5 0.5V12.5" stroke="#666" stroke-width="1" fill="none"/></svg><svg style="position:absolute;left:1381px;top:1021px;" width="15" height="14" viewBox="0 0 15 14"><path d="M0.5 0.5H13.5V12.5H0.5Z" stroke="#666" stroke-width="1" fill="none"/><path d="M3.5 2.5H10.5V10.5H3.5Z" stroke="#666" stroke-width="1" fill="none"/><path d="M5 4.5H9 M5 6.5H9 M5 8.5H9" stroke="#666" stroke-width="1"/></svg><svg style="position:absolute;left:1419px;top:1021px;" width="15" height="14" viewBox="0 0 15 14"><path d="M0.5 0.5H13.5V12.5H0.5Z M0.5 7.5H8.5V0.5 M4.5 0.5V7.5" stroke="#666" stroke-width="1" fill="none"/></svg><div style="left:1451px;top:1027px;width:6px;height:2px;background:#444"></div><div style="left:1461px;top:1027px;width:100px;height:1px;background:#999"></div><div style="left:1487px;top:1021px;width:4px;height:13px;background:#555"></div><svg style="position:absolute;left:1561px;top:1022px;" width="11" height="11" viewBox="0 0 11 11"><path d="M5.5 0V11 M0 5.5H11" stroke="#444" stroke-width="1.6"/></svg><div style="left:1584px;top:1015px;height:24px;line-height:24px;font-size:12px;color:#333;white-space:nowrap;">60%</div><svg style="position:absolute;left:1465px;top:990px;" width="48" height="42" viewBox="0 0 48 42"><defs><linearGradient id="wg1" x1="0" y1="0" x2="1" y2="0"><stop offset="0" stop-color="#4a86d0"/><stop offset="1" stop-color="#6cc0f0"/></linearGradient><linearGradient id="wg2" x1="0" y1="1" x2="1" y2="0"><stop offset="0" stop-color="#d8f040"/><stop offset="1" stop-color="#3cb878"/></linearGradient></defs><path d="M46 1Q22 4 8 16Q0 24 4 31Q9 38 22 36Q10 34 9 27Q8 20 18 13Q30 5 46 1Z" fill="url(#wg1)" opacity="0.9"/><path d="M12 28Q14 22 26 20Q16 25 19 29Q21 31 26 28" stroke="#4a86d0" stroke-width="2" fill="none" opacity="0.9"/><path d="M38 16Q28 14 22 19Q34 17 36 22Q38 30 24 36Q12 40 2 40Q22 42 34 34Q44 26 38 16Z" fill="url(#wg2)" opacity="0.9"/></svg><div style="left:1509px;top:982px;height:42px;line-height:42px;font-size:21px;color:#4e90d2;white-space:nowrap;font-weight:bold;opacity:0.92">极光下载站</div><div style="left:1510px;top:1009px;height:32px;line-height:32px;font-size:16px;color:#46b868;white-space:nowrap;opacity:0.92">www.xz7.com</div><div style="left:1350px;top:947px;width:205px;height:24px;background:#fff;border:1px solid #b8d0ea"></div><svg style="position:absolute;left:1330px;top:940px;" width="34" height="34" viewBox="0 0 34 34"><g transform="rotate(-12 17 17)"><rect x="4" y="4" width="26" height="26" rx="5" fill="#f0561d"/><path d="M23 11Q19 8 14 10Q10 12 13 15Q16 17 20 18Q24 20 20 23Q15 25 10 22" stroke="#fff" stroke-width="3.5" fill="none" stroke-linecap="round"/></g></svg><div style="left:1368px;top:944px;height:30px;line-height:30px;font-size:15px;color:#1f6fd0;white-space:nowrap;font-weight:bold">中</div><div style="left:1394px;top:945px;height:26px;line-height:26px;font-size:13px;color:#1f6fd0;white-space:nowrap;font-weight:bold">°,</div><svg style="position:absolute;left:1419px;top:951px;" width="10" height="16" viewBox="0 0 10 16"><rect x="2.5" y="0" width="5" height="10" rx="2.5" fill="#1f6fd0"/><path d="M0.8 7Q1 12 5 12Q9 12 9.2 7 M5 12V15 M2 15H8" stroke="#1f6fd0" stroke-width="1.4" fill="none"/></svg><svg style="position:absolute;left:1442px;top:953px;" width="15" height="12" viewBox="0 0 15 12"><rect x="0.7" y="0.7" width="13.5" height="10.5" rx="1" fill="none" stroke="#1f6fd0" stroke-width="1.4"/><path d="M3 4H4 M6 4H7 M9 4H10 M12 4H12.5 M3 7H4 M6 7H7 M9 7H10 M4 9H11" stroke="#1f6fd0" stroke-width="1.2"/></svg><svg style="position:absolute;left:1465px;top:952px;" width="16" height="14" viewBox="0 0 16 14"><path d="M5 0L0 3L2 7L4 6V14H12V6L14 7L16 3L11 0Q8 3 5 0Z" fill="#1f6fd0"/></svg><svg style="position:absolute;left:1489px;top:953px;" width="16" height="12" viewBox="0 0 16 12"><rect x="0" y="2" width="16" height="10" rx="5" fill="#1f6fd0"/><circle cx="11" cy="7" r="2" fill="#fff"/><path d="M3 7H7 M5 5V9" stroke="#fff" stroke-width="1.2"/><path d="M8 2V0" stroke="#1f6fd0" stroke-width="1.5"/></svg><svg style="position:absolute;left:1513px;top:952px;" width="14" height="14" viewBox="0 0 14 14"><rect x="0" y="0" width="6" height="6" rx="1.5" fill="#1f6fd0"/><rect x="8" y="0" width="6" height="6" rx="1.5" fill="#1f6fd0"/><rect x="0" y="8" width="6" height="6" rx="1.5" fill="#1f6fd0"/><rect x="8" y="8" width="6" height="6" rx="1.5" fill="#1f6fd0"/></svg><svg style="position:absolute;left:1538px;top:951px;" width="15" height="16" viewBox="0 0 15 16"><path d="M7.5 0L10 3H14L13 7L15 10L11 11L7.5 15L4 11L0 10L2 7L1 3H5Z" fill="#1f6fd0"/><circle cx="7.5" cy="8" r="2.5" fill="#fff"/></svg><div style="left:0px;top:2px;width:1px;height:1039px;background:#217346"></div><div style="left:1px;top:1018px;width:1px;height:20px;background:#fff"></div><div style="left:1px;top:1038px;width:1625px;height:1px;background:#fff"></div><div style="left:0px;top:1039px;width:1626px;height:1px;background:#1b6838"></div><div style="left:0px;top:1040px;width:1626px;height:1px;background:#1e3142"></div>
</body></html>
